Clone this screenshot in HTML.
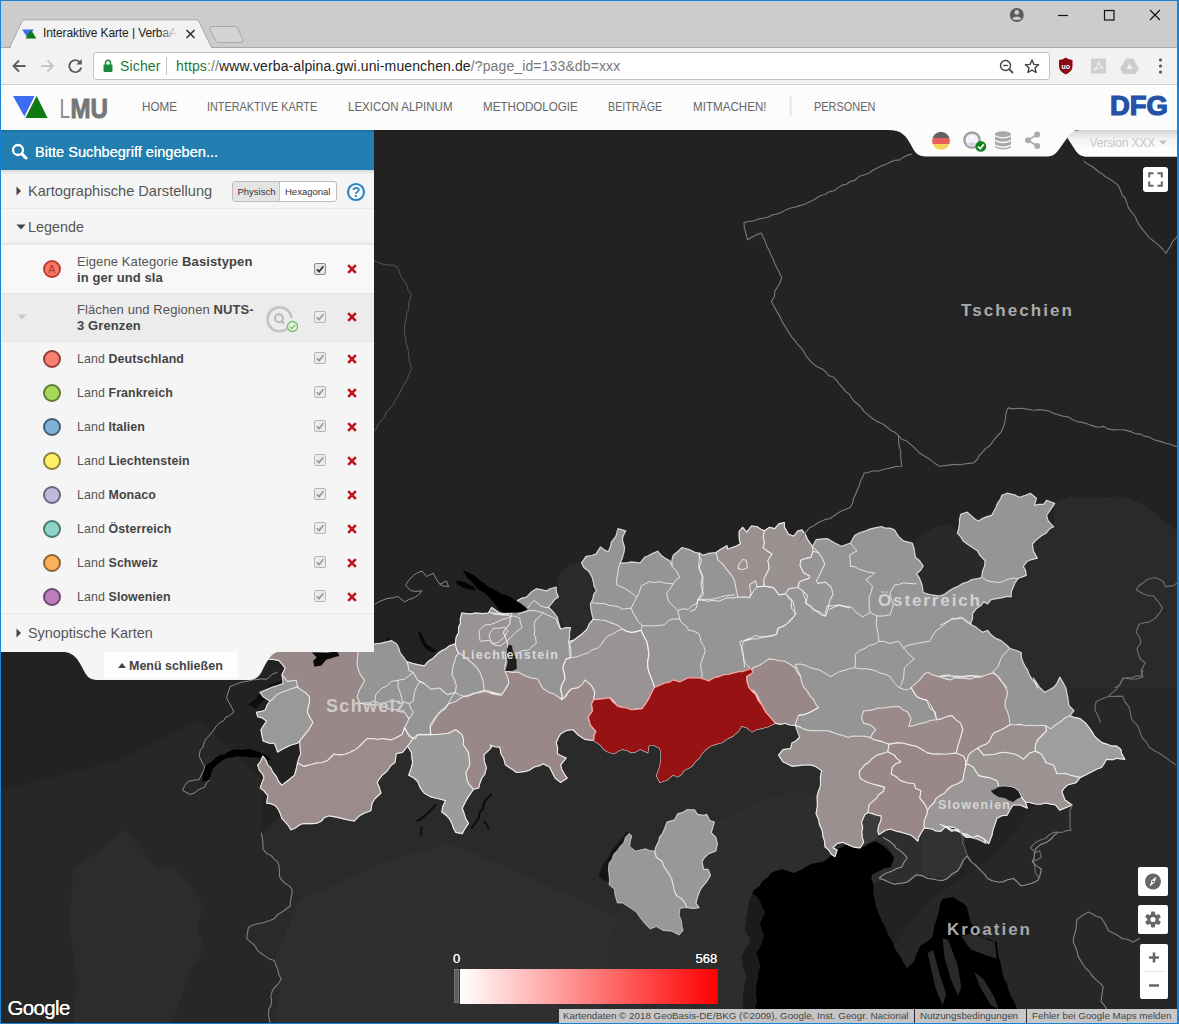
<!DOCTYPE html>
<html lang="de">
<head>
<meta charset="utf-8">
<title>Interaktive Karte | VerbaAlpina</title>
<style>
*{box-sizing:border-box;margin:0;padding:0}
html,body{width:1179px;height:1024px;overflow:hidden;background:#222}
body{font-family:"Liberation Sans",sans-serif;position:relative;color:#555}
.abs{position:absolute}
.t{position:absolute;white-space:nowrap;line-height:1}
#win{position:absolute;left:0;top:0;width:1179px;height:1024px;border:1px solid #1883d7;border-left-width:1px;border-right-width:2px;border-bottom-width:1.500px;pointer-events:none;z-index:100}
/* chrome */
#titlebar{position:absolute;left:0;top:0;width:1179px;height:48px;background:#cccccc}
#toolbar{position:absolute;left:0;top:47px;width:1179px;height:38px;background:#f2f2f2;border-bottom:1px solid #cfcfcf;border-top:1px solid #a9a9a9}
#urlbox{position:absolute;left:93px;top:4px;width:957px;height:28px;background:#fff;border:1px solid #c4c4c4;border-radius:3px}
/* nav */
#nav{position:absolute;left:0;top:85px;width:1179px;height:45px;background:#fcfcfc}
.nv{position:absolute;top:14.500px;transform-origin:0 50%;font-size:13px;color:#666;white-space:nowrap;line-height:14px}
/* map */
#map{position:absolute;left:0;top:130px;width:1179px;height:894px;background:#222}
/* panel */
#panel{position:absolute;left:2px;top:130px;width:372px;height:522px;background:#f5f5f5}
#search{position:absolute;left:0;top:0;width:372px;height:40px;background:#237fb1;box-shadow:inset 0 2px 2px -1px #1a6a98}
.row{position:absolute;left:0;width:372px}
.li{position:absolute;left:75px;font-size:13px;letter-spacing:0.100px;color:#555;white-space:nowrap;line-height:16px}
.li b{color:#444}
.dot{position:absolute;left:41px;width:18px;height:18px;border-radius:50%;border:2px solid #5e5e5e}
.cb{position:absolute;left:312px;width:12px;height:12px;border:1px solid #b5b5b5;border-radius:2px;background:#ececec}
.cb svg{position:absolute;left:0;top:0}
.rx{position:absolute;left:345px;width:10px;height:10px}
</style>
</head>
<body>
<!--CHROME-->
<div id="titlebar">
  <!-- tab -->
  <svg class="abs" style="left:0;top:0" width="300" height="48" viewBox="0 0 300 48">
    <path d="M6.5 47.5 L10 46.5 L22 21.5 Q23 20 25 19.8 L196 19.8 Q198 20 199 21.5 L211 46.5 L214.5 47.5 Z" fill="#f2f2f2" stroke="#a6a6a6" stroke-width="1"/>
    <path d="M210.5 26.5 L235 26.5 Q237 26.5 238 28.5 L243 40 Q243.500 42.500 241 42.500 L218.500 42.500 Q216.500 42.500 215.500 40.500 L210 29 Q209.300 26.500 211 26.500Z" fill="#d4d4d4" stroke="#a9a9a9" stroke-width="1"/>
    <polygon points="22.200,29.500 33.800,29.500 27.600,38" fill="#3d6cf0"/>
    <polygon points="31,29.700 25.600,38.400 36.400,38.400" fill="#0d7a12"/>
    <path d="M186.500 30 L194.500 38 M194.500 30 L186.500 38" stroke="#333" stroke-width="1.600" fill="none"/>
  </svg>
  <div class="t" style="left:43px;top:27px;font-size:12px;color:#222;width:136px;overflow:hidden;letter-spacing:-0.100px">Interaktive Karte | VerbaAlpina</div>
  <div class="abs" style="left:160px;top:24px;width:20px;height:20px;background:linear-gradient(90deg,rgba(242,242,242,0),#f2f2f2 85%)"></div>
  <!-- window controls -->
  <svg class="abs" style="left:1000px;top:0" width="179" height="32" viewBox="0 0 179 32">
    <circle cx="16.800" cy="15" r="7" fill="#5a5a5a"/>
    <circle cx="16.800" cy="12.400" r="2.300" fill="#ccc"/>
    <path d="M11.800 18.800 Q16.800 14.400 21.800 18.800 Q16.800 21.400 11.800 18.800Z" fill="#ccc"/>
    <path d="M58 15.500 H68" stroke="#111" stroke-width="1.200"/>
    <rect x="104.500" y="10.500" width="9.500" height="9.500" fill="none" stroke="#111" stroke-width="1.200"/>
    <path d="M150 10 L160 20 M160 10 L150 20" stroke="#111" stroke-width="1.200"/>
  </svg>
  </div>
<div class="abs" style="left:10.500px;top:47px;width:200px;height:1px;background:#f2f2f2;z-index:3"></div>
<div id="toolbar">
  <svg class="abs" style="left:0;top:-1px" width="93" height="38" viewBox="0 0 93 38">
    <path d="M25.500 19 H13.500 M19 13.500 L13.500 19 L19 24.500" stroke="#5a5a5a" stroke-width="1.800" fill="none"/>
    <path d="M41 19 H53 M47.500 13.500 L53 19 L47.500 24.500" stroke="#c6c6c6" stroke-width="1.800" fill="none"/>
    <path d="M80 15.300 A6 6 0 1 0 81.200 20.500" stroke="#5a5a5a" stroke-width="1.800" fill="none"/>
    <polygon points="81.800,12 81.800,17.500 76.300,17.500" fill="#5a5a5a"/>
  </svg>
  <div id="urlbox">
    <svg class="abs" style="left:8px;top:5px" width="12" height="16" viewBox="0 0 12 16">
      <rect x="1.500" y="6.500" width="9" height="7.500" rx="1" fill="#1a8a3a"/>
      <path d="M3.500 7 V4.800 A2.500 2.500 0 0 1 8.500 4.800 V7" stroke="#1a8a3a" stroke-width="1.500" fill="none"/>
    </svg>
    <div class="t" style="left:26px;top:6px;font-size:14px;color:#1a7a3a;letter-spacing:0.150px">Sicher</div>
    <div class="abs" style="left:72px;top:4px;width:1px;height:18px;background:#c8c8c8"></div>
    <div class="t" style="left:82px;top:6px;font-size:14px;color:#222;letter-spacing:0.120px"><span style="color:#1a7a3a">https</span><span style="color:#777">://</span>www.verba-alpina.gwi.uni-muenchen.de<span style="color:#777">/?page_id=133&amp;db=xxx</span></div>
    <svg class="abs" style="left:902px;top:4px" width="50" height="20" viewBox="0 0 50 20">
      <circle cx="9.500" cy="8.500" r="5" stroke="#444" stroke-width="1.400" fill="none"/>
      <path d="M13.200 12.200 L17 16" stroke="#444" stroke-width="1.800"/>
      <path d="M7.200 8.500 H11.800" stroke="#444" stroke-width="1.400"/>
      <path d="M36 3 L37.900 7.400 L42.600 7.800 L39 10.900 L40.100 15.500 L36 13.100 L31.900 15.500 L33 10.900 L29.400 7.800 L34.100 7.400Z" stroke="#444" stroke-width="1.400" fill="none" stroke-linejoin="round"/>
    </svg>
  </div>
  <svg class="abs" style="left:1055px;top:7px" width="120" height="24" viewBox="0 0 120 24">
    <path d="M4 5 Q8 4.500 10.800 2.500 Q13.500 4.500 17.500 5 V11 Q17.500 16.500 10.800 19.500 Q4 16.500 4 11Z" fill="#8a0a0f"/>
    <text x="10.800" y="13.500" font-family="Liberation Sans, sans-serif" font-size="7" font-weight="bold" fill="#fff" text-anchor="middle">uo</text>
    <rect x="36" y="3.500" width="15" height="15" fill="#cfcfcf"/>
    <path d="M39 15.500 Q43 11 43.500 6 Q44 10.500 48.500 13 Q43 12.500 39 15.500Z" fill="none" stroke="#efefef" stroke-width="1.200"/>
    <path d="M71 3.500 H78 L84 14 L80.500 19 H68 L65 14Z" fill="#cdcdcd"/>
    <path d="M74.500 8.500 L71.500 14 H77.500Z" fill="#f2f2f2"/>
    <circle cx="105.500" cy="5" r="1.600" fill="#555"/><circle cx="105.500" cy="11" r="1.600" fill="#555"/><circle cx="105.500" cy="17" r="1.600" fill="#555"/>
  </svg>
</div>
<!--/CHROME-->
<!--NAV-->
<div id="nav">
  <svg class="abs" style="left:0;top:0" width="130" height="45" viewBox="0 0 130 45">
    <polygon points="13,11 34.500,11 24.400,31.500" fill="#3d6cf0"/>
    <polygon points="36.600,11 25.400,33 47.600,33" fill="#0d7a12"/>
    <text x="59.500" y="32.600" font-family="Liberation Sans, sans-serif" font-size="27.500" fill="#8a8a8a" textLength="10.500" lengthAdjust="spacingAndGlyphs" style="font-weight:normal">L</text>
    <text x="70.500" y="32.600" font-family="Liberation Sans, sans-serif" font-size="27.500" font-weight="bold" fill="#767676" stroke="#767676" stroke-width="0.900" textLength="37.500" lengthAdjust="spacingAndGlyphs">MU</text>
  </svg>
  <div class="nv" id="n1" style="left:142px;transform:scaleX(0.897)">HOME</div>
  <div class="nv" id="n2" style="left:207px;transform:scaleX(0.835)">INTERAKTIVE KARTE</div>
  <div class="nv" id="n3" style="left:348px;transform:scaleX(0.888)">LEXICON ALPINUM</div>
  <div class="nv" id="n4" style="left:483px;transform:scaleX(0.893)">METHODOLOGIE</div>
  <div class="nv" id="n5" style="left:608px;transform:scaleX(0.825)">BEITRÄGE</div>
  <div class="nv" id="n6" style="left:693px;transform:scaleX(0.893)">MITMACHEN!</div>
  <div class="abs" style="left:789px;top:11px;width:3px;height:20px;background:#ececec"></div>
  <div class="nv" id="n7" style="left:813.500px;transform:scaleX(0.841)">PERSONEN</div>
  <svg class="abs" style="left:1108px;top:9px" width="64" height="24" viewBox="0 0 64 24">
    <text x="2" y="21" font-family="Liberation Sans, sans-serif" font-size="27" font-weight="bold" fill="#2452a8" textLength="58" lengthAdjust="spacingAndGlyphs" stroke="#2452a8" stroke-width="1.200">DFG</text>
  </svg>
</div>
<!--/NAV-->
<!--MAP-->
<div id="map"><svg class="abs" style="left:0;top:0" width="1179" height="894" viewBox="0 0 1179 894">
<rect x="0" y="0" width="1179" height="894" fill="#222222"/>
<path d="M261.2 702.6 L263 719.1 L277.6 731.9 L279.5 746.5 L292.2 759.3 L290.4 775.7 L270.3 790.3 L248.4 797.6 L246.6 808.6 L261.2 823.2 L274 830.5 L281.3 848.8 L272.1 861.6 L268.5 885.3 L270.3 894.1 L765 894 L760 800 L800 770 L830 730 L830 670 L826 630 L810 600 L780 570 L700 560 L600 570 L520 610 L480 590 L450 610 L410 615 L380 640 L300 670Z" fill="#2a2a2a"/>
<path d="M300 770 L380 733.6 L447.8 713.3 L515.5 740.4 L603.6 781 L664.6 808.2 L732.4 815 L759.5 835.3 L746 894 L275 894 L280 855 L272 835Z" fill="#2f2f2f"/>
<path d="M0 660 L120 630 L200 590 L262 650 L261.2 702.6 L263 719.1 L277.6 731.9 L279.5 746.5 L292.2 759.3 L290.4 775.7 L270.3 790.3 L248.4 797.6 L246.6 808.6 L261.2 823.2 L274 830.5 L281.3 848.8 L272.1 861.6 L268.5 885.3 L270.3 894.1 L0 894Z" fill="#272727"/>
<path d="M73.1 739.2 L95 724.6 L124.2 699 L146.1 724.6 L157.1 739.2 L171.7 735.5 L190 753.8 L204.6 775.7 L197.3 797.6 L204.6 819.5 L190 841.5 L182.6 863.4 L171.7 894.1 L73.1 894.1 L76.7 848.8 L69.4 797.6Z" fill="#2c2c2c"/>
<path d="M640 720 L700 700 L760 670 L800 660 L830 670 L880 710 L905 740 L880 750 L850 770 L800 770 L760 800 L765 894 L600 894 L610 810Z" fill="#2d2d2d"/>
<path d="M1010 510 L1060 450 L1120 430 L1179 410 L1179 894 L900 894 L880 830 L930 770 L990 730 L1040 670 L1075 630Z" fill="#272727"/>
<path d="M912.1 24 L877.8 37.7 L850.3 51.5 L809.2 72 L781.7 82.3 L744 92.6 L747.4 109.8 L774.8 133.8 L781.7 147.5 L771.4 171.5 L788.6 202.4 L809.2 229.9 L836.6 250.5 L864 281.3 L898.4 305.3 L918.9 322.5 L939.5 336.2 L973.8 332.8 L1001.3 301.9 L1008.1 277.9 L1049.3 281.3 L1090.5 295.1 L1131.7 301.9 L1179 317 L1179 159.9 L1166 123.5 L1145.4 102.9 L1131.7 82.3 L1117.9 54.9 L1083.6 30.9 L1056.2 13.7 L918.9 13.7Z" fill="#242424"/>
<path d="M1053.7 396.7 L1054.7 373.4 L1070 366.2 L1094.3 368.3 L1122.8 366.2 L1143.1 374.4 L1163.4 390.6 L1179 402.8 L1179 557.9 L1037.5 557.9 L1029.3 544.9 L1023.3 532.8 L1021.2 522.6 L1010.1 518.5 L1000.9 510.4 L995.8 508.4 L987.7 500.3 L982.6 502.3 L970.5 494.2 L972.5 484 L983.7 471.8 L987.7 473.9 L990.8 469.8 L1011.1 466.8 L1013.1 457.6 L1018.2 448.5 L1026.3 445.4 L1023.3 436.3 L1027.3 431.2 L1037.5 428.2 L1033.4 421.1 L1032.4 414 L1041.5 405.8Z" fill="#2a2a2a"/>
<path d="M915.5 427.4 L912.2 413 L923.2 403.1 L938.6 396.5 L951.9 394.3 L957.4 403.1 L962.9 410.8 L977.3 420.8 L985 430.7 L981.7 447.2 L971.7 449.5 L958.5 456.1 L939.7 466 L923.2 462.7 L922.1 455 L916.6 443.9 L923.2 436.2Z" fill="#292929"/>
<path d="M864.7 684.7 L872.4 683.6 L877.1 685.3 L881.3 685.8 L881 690.3 L878.5 696.5 L877.9 701.3 L879 704.6 L874.6 710.1 L869.2 712.5 L865.8 714.5 L863.6 712.3 L862.2 707.4 L861.7 701.3 L862.7 697.9 L861.4 692.4Z" fill="#3c3c3c"/>
<path d="M921 701.3 L926.7 699.6 L932 699 L935.5 700.8 L940.8 701.3 L945.3 696.8 L951.9 701.3 L957.4 699 L962.9 704.6 L964.7 709.7 L965.1 714.5 L966.2 720.9 L967.3 725.5 L964.6 730.3 L962.9 736.6 L958.2 740.6 L955.2 745.4 L950.3 747.6 L945.3 749.8 L938.6 747.6 L934.2 748.7 L930.2 746.8 L925.4 746.5 L922.5 741.3 L921 736.6 L921.6 730.1 L921.1 725.9 L922.1 718.9 L921.8 712.5 L920.6 707.8Z" fill="#323232"/>
<path d="M879 704.6 L885.1 700.5 L890.1 699 L896.7 701.3 L900.3 701.9 L905.5 703.5 L911.3 705.3 L914.4 707.9 L917.7 711.2 L919.5 706.4 L921 701.3 L920.6 707.8 L921.8 712.5 L922.1 718.9 L921.1 725.9 L921.6 730.1 L921 736.6 L922.5 741.3 L925.4 746.5 L921.1 745.8 L914.4 745.4 L909.9 752 L903.6 754.7 L898.9 755.3 L894.5 750.9 L885.7 752 L881.4 750.6 L876.8 748.7 L881.3 742.1 L888.2 740.8 L892.3 738.8 L890.1 734.4 L894.5 729.9 L893 726.1 L890.1 721.1 L887.7 717.6 L883.5 712.3 L879.6 710.5 L874.6 710.1Z" fill="#2e2e2e"/>
<path d="M756 894.1 L756.3 889.1 L757 883.7 L756.6 880 L755 876.4 L756.8 871.3 L756 866.8 L755.7 860.5 L756 856.7 L757.1 851.8 L757.5 847.6 L758 843 L759.7 838.1 L759.4 833.4 L757.5 827.2 L756 823.2 L759.1 818.7 L761.2 814.5 L763.4 808.2 L763.2 803.5 L761.1 799.1 L759.7 793.3 L762.1 788.4 L765.3 782.1 L762.1 777.4 L759.7 770.9 L756.1 766 L752.2 763.4 L754.1 760.1 L759.6 756 L761.6 752.2 L767.5 747.4 L770.9 742.9 L775.7 741 L782.1 739.2 L787.3 740.7 L793.3 742.9 L799.1 740.7 L804.6 738 L808.2 735.5 L812.1 733.8 L818.7 732.6 L823.2 731.7 L827.6 728.8 L830.6 726.1 L834.4 720.5 L841.1 717.6 L845.5 714.9 L850.9 715.8 L854.5 715.1 L859.8 716.8 L864.2 716.8 L868.5 713.8 L875.4 711.2 L881.7 714.6 L886.6 718.7 L891.5 723.8 L894.1 728 L892.7 732.1 L890.3 737.3 L884.4 738.3 L879.1 741.1 L871.7 744.8 L871.4 748.6 L873.5 754.7 L873.5 759.7 L873.4 765.6 L875 769.4 L875.4 774.6 L877 779 L878.4 783.7 L880.7 787.7 L882.9 793.3 L885.6 797.4 L887.7 804.3 L890.3 808.2 L893.5 813.4 L894.4 817.8 L897.8 823.2 L901.6 828.2 L903.8 833.5 L907.1 838.1 L910.9 835 L914.6 830.6 L916 824.4 L918.2 820.7 L920.2 815.7 L925 813.1 L931.4 808.2 L933.3 803.7 L934 799.5 L934.2 795.7 L936.3 790.5 L937.4 786.9 L938.8 782.1 L939.3 778.6 L940.5 772.9 L942.6 769 L948.6 767.8 L953.8 767.2 L957.6 770.3 L962.2 772.4 L966.8 776.5 L968.1 782.9 L970 788.9 L970.6 793.3 L975 797.5 L977.2 801.6 L979.2 804.1 L983.6 808.2 L989.3 808.9 L991.7 810.6 L996.7 812 L997.2 816 L997.5 820.8 L998.6 826.9 L1000.4 832.1 L1001.3 836.7 L1002 839.3 L1002.6 844.1 L1004.2 849.3 L1007.3 854.2 L1007.7 856.9 L1009.1 861.2 L1010.7 866 L1013.4 870.6 L1015.7 875.6 L1017.2 879.1 L1017.9 883.6 L1019.8 888.6 L1020.9 894.1 L1016 894.5 L1011.7 893.5 L1007 894.3 L1002.4 894.8 L997.3 894.2 L992.5 894.8 L988.9 893.6 L984 894.5 L979.8 893.6 L974.1 894.8 L970.8 893.7 L965.2 894.2 L961.8 893.3 L957.1 894.5 L953.5 894.4 L947.2 894.2 L942.7 893.3 L938 895 L934.7 893.3 L928.7 893.2 L925 894.5 L919.5 894.1 L915.5 894.8 L911.2 893.1 L905.7 894.2 L901.6 894 L898.3 894.9 L893.2 894.9 L887.7 894.6 L884.3 895.1 L880.4 893.7 L875.8 894.9 L870.8 893.8 L866.2 893.8 L861 893.9 L857.4 893.8 L852.2 894.7 L846.8 893.5 L841.9 895.1 L837.7 894.4 L834.7 893.7 L830.2 894 L824.2 895.1 L820.4 895 L814.5 893.5 L811.8 893.5 L806.5 893.6 L800.7 893.7 L796.4 893.9 L793.2 893.9 L787.4 894.2 L782.6 895 L778.1 895 L774 893.4 L769.5 894.5 L764 894.1 L759.8 894.9Z" fill="#000000"/>
<path d="M756 894.1 L756.3 889.1 L757 883.7 L756.6 880 L755 876.4 L756.8 871.3 L756 866.8 L755.7 860.5 L756 856.7 L757.1 851.8 L757.5 847.6 L758 843 L759.7 838.1 L759.4 833.4 L757.5 827.2 L756 823.2 L759.1 818.7 L761.2 814.5 L763.4 808.2 L763.2 803.5 L761.1 799.1 L759.7 793.3 L762.1 788.4 L765.3 782.1 L762.1 777.4 L759.7 770.9 L756.1 766 L752.2 763.4 L750.1 768.5 L748.5 774.6 L747.9 778.6 L746.8 784.2 L745.7 786.9 L746.1 793.4 L744.8 797 L746 803 L749.2 806.6 L750.4 812 L746.7 816.6 L744.1 821.3 L741.1 826.9 L742.7 830.5 L742.4 835 L744.1 840.6 L745.9 843.7 L746.6 849.3 L744.6 854.6 L743.7 859.6 L743.1 863.1 L742.9 867.9 L742.5 874.3 L743.6 878.9 L744.4 883.9 L744.1 888.9 L744.8 894.1 L751.3 894.4Z" fill="#1b1b1b"/>
<path d="M942.6 808.2 L948.2 810.1 L957.5 834.4 L961.2 856.7 L958.3 866.1 L950.8 849.3 L944.4 826.9Z" fill="#2a2a2a"/>
<path d="M961.2 806.4 L974.3 802.6 L983.6 808.2 L994.8 812 L996.7 828.8 L985.5 825 L970.6 819.4Z" fill="#2a2a2a"/>
<path d="M927.7 823.2 L933.2 819.4 L938.8 841.8 L946.3 864.2 L942.6 875.4 L935.1 856.7Z" fill="#2a2a2a"/>
<path d="M974.3 841.8 L983.6 849.3 L994.8 867.9 L998.6 879.1 L991.1 875.4 L979.9 856.7Z" fill="#2a2a2a"/>
<path d="M417.7 500.6 L421.1 502.8 L424.4 509.8 L426.6 513.9 L433.2 518.3 L436.5 520.5 L433.2 522.7 L426.6 519.4 L424.1 516.8 L421.1 511.7 L419.2 506Z" fill="#0a0a0a"/>
<path d="M386.8 507.2 L389.5 508.4 L388.6 516.1 L386.4 517.2 L387.2 513Z" fill="#0a0a0a"/>
<path d="M201.6 651.5 L203.4 644.7 L203.8 638.7 L207.1 634.4 L212.4 631.2 L215.5 627.8 L220.9 624.6 L224 624.8 L228.3 621.8 L233.8 619.7 L238 619.3 L242.5 619.9 L248.3 619 L252.1 619.4 L255.7 620.9 L260.9 622.8 L266.7 625.2 L271.1 630.3 L265.3 629.4 L261.6 627.7 L255.7 627.4 L250.2 627.4 L247.1 626.4 L241.4 626.8 L237.4 625.9 L233.4 627.6 L227.2 627.9 L222.8 630.3 L217.8 633.7 L212.6 639.1 L211.1 643.8 L208.9 650Z" fill="#000000"/>
<path d="M248.4 574.8 L252.7 571 L255.9 568.7 L259.7 563.6 L262.8 560.3 L266.7 558.8 L270.3 554.7 L273.6 553.2 L278 551.9 L283.1 549.2 L284.9 554.7 L280.3 556.9 L276.9 559.7 L272.1 563.8 L267.8 567.5 L262.7 571.1 L260.3 573.6 L255.7 578.4Z" fill="#0d0d0d"/>
<path d="M609 733.3 L611.9 729.5 L613.9 724.1 L618.2 719.5 L620.5 715.9 L623.6 712.9 L625.5 707.2 L628.9 703.5 L626.6 701.2 L624.3 705 L620.5 709.8 L616.6 715 L612.7 718.8 L610.3 722.9 L607.5 729.1 L604.4 731.8 L601.8 737.1 L600.7 740.3 L598.3 745.5 L602.9 750.1 L609 751.6 L608.5 746.8 L608.1 741.9 L608.8 737.1Z" fill="#151515"/>
<path d="M559.7 443.1 L568.5 435.4 L581.7 432.1 L588.3 440.9 L592.7 454.1 L596 462.9 L591.6 474 L592.7 485 L590.5 494.9 L581.7 502.6 L576.2 510.3 L569.6 513.6 L566.3 507 L564.1 497.1 L558.5 487.2 L549.7 476.2 L546.4 467.3 L558.5 460.7 L557.4 449.7Z" fill="#2b2b2b"/>
<path d="M266 515 L270.2 514.5 L275.2 514.3 L280 515.2 L284.1 514.7 L288.4 515 L294.6 514 L299.3 514.8 L303.1 514 L307.7 514.8 L311.6 515.1 L317.1 514.3 L321.2 515 L325.9 515.5 L331.2 515.3 L335.3 514.4 L340.1 514.7 L344.8 516 L348.9 514.7 L354.4 515.4 L358 515 L358.1 522 L358.1 513.9 L365 514.6 L367.8 513.1 L374.7 513.9 L381.2 513.1 L384.6 512.3 L391.3 510.6 L396.8 513.9 L399 518.5 L400.1 522.7 L403.9 527.7 L406.7 531.5 L413.3 533.7 L419.9 535.1 L424.4 535.9 L428.5 531.2 L433.2 528.2 L437.6 523.8 L442 520.5 L445.6 519 L449.6 515.7 L455.3 513.9 L456.3 506.9 L458.6 502.8 L458.7 496.8 L460.5 493.4 L460.3 488.8 L461.9 483 L470.7 484.1 L475.2 483 L483 483.6 L488.4 483 L491.7 477.5 L496.1 480.7 L499.4 483 L506 484 L510 485.2 L504.1 485.3 L499.7 484.6 L494.2 484.1 L490 482.6 L498.8 483.7 L504 484.2 L512.1 482.6 L515.1 478.4 L517.6 470.4 L522.1 468.1 L526.4 467.1 L531.6 461.7 L536.3 458.7 L541.1 459.7 L546.3 460.9 L550.7 458.5 L556.2 457.2 L556.4 462.3 L558.4 467.1 L554.5 469.8 L551.8 473.4 L548.5 477 L553.1 481.6 L557.3 487 L558.5 491.9 L560.6 499.1 L565.8 497.5 L570.6 497.6 L569.5 503 L569.6 507.5 L568.4 511.3 L573.9 510.2 L577.7 507.3 L582.3 503.8 L587.1 499.1 L589.4 493.9 L593.3 489.2 L592 484.7 L590.9 479 L590.4 473.7 L592.7 469.3 L593.7 464.3 L596.4 460.5 L593.9 456 L593.5 452.7 L592 447.2 L588.9 441.4 L583.8 437.5 L581.6 432.9 L586 426.3 L591.7 425.5 L595.9 424.1 L600.4 417 L604.3 419.8 L608.1 421.9 L610.3 417.1 L611.4 411.9 L615.8 406.4 L618 398.7 L625.7 400.9 L623.2 405.9 L622.4 409.7 L624.6 417.5 L624.1 421.9 L622.3 428.4 L620.2 432.9 L626.5 432.9 L631.3 431.8 L640.1 432.9 L644.5 427.4 L648.1 425.8 L653.3 423 L657.7 421.2 L661.1 425.2 L664.4 427.8 L669.9 430.7 L672.1 436.2 L671.8 430.5 L673.2 425.2 L678.6 420.7 L682 417.5 L689.7 419.7 L695 422.4 L699.7 423 L703 425.2 L710.7 423 L707.8 423.3 L716 422.6 L720.5 419.5 L726.9 415.8 L727.6 419.2 L733 417.2 L736.6 416.1 L740.6 413.8 L739.3 409 L739.2 401.5 L742.6 397.4 L746.8 402.1 L751.5 396 L757 396.7 L761.1 399.4 L764.5 400.8 L769.3 397.4 L774.8 398.7 L778.9 393.9 L784.4 392.6 L784.4 397.4 L788.5 404.2 L793.9 406.2 L798 400.8 L802.1 400.1 L805.5 404.9 L807.6 409.7 L812.4 416.5 L816.1 409.7 L822.3 408.9 L827.2 408.6 L834.9 413 L841.5 416.3 L846.9 414.2 L850.4 413 L854.8 405.3 L860.1 402.5 L865.8 400.9 L869.7 399.1 L874.8 397.8 L881.3 396.5 L884.8 397.8 L889.9 398.1 L894.5 399.8 L896.9 403.8 L899 406.9 L903.3 410.8 L908.3 412.1 L912.2 413 L914 418.3 L914.7 422.8 L915.5 427.4 L919.2 430.2 L923.2 436.2 L920.6 440.3 L916.6 443.9 L919.4 447.8 L922.1 455 L923.2 462.7 L929.7 464.5 L934.9 465.3 L939.7 466 L944.2 464.4 L949.3 460.7 L952.5 458.8 L958.5 456.1 L962 453.7 L967.3 452.2 L971.7 449.5 L977.5 448.7 L981.7 447.2 L982.6 440.9 L984.6 435.8 L985 430.7 L979.9 425.4 L977.3 420.8 L973.1 418.1 L967.1 413.9 L962.9 410.8 L960.7 406.8 L957.4 403.1 L958.6 398.7 L959.5 393.8 L959.5 389.5 L960.7 384.3 L967.3 382.1 L970.6 385.1 L975.2 389.3 L978.4 391 L981.7 388.9 L986.8 386.6 L991.6 385.4 L994.3 380.5 L996.1 376.9 L997.3 373.7 L1000.7 368.5 L1001.9 365.2 L1007 363.2 L1014.8 364.9 L1019.2 367.3 L1025.4 365.4 L1030.4 363.2 L1036.5 368.3 L1034.4 375.4 L1038.6 374.3 L1043.6 374.4 L1046.6 370.3 L1054.7 373.4 L1050.7 379.4 L1046.6 385.5 L1048 390.4 L1050.7 393.7 L1053.7 396.7 L1049.8 398.6 L1046.4 403 L1041.5 405.8 L1036.8 409.4 L1032.4 414 L1033.4 421.1 L1037.5 428.2 L1031.3 429.7 L1027.3 431.2 L1023.3 436.3 L1025.5 440.4 L1026.3 445.4 L1018.2 448.5 L1015 452.9 L1013.1 457.6 L1011.4 461.5 L1011.1 466.8 L1007.1 466.4 L1001.5 467.9 L994.8 468.9 L990.8 469.8 L987.7 473.9 L983.7 471.8 L981 475.6 L975.7 479.3 L972.5 484 L972.6 488.2 L970.5 494.2 L975.4 496.7 L978.8 499.4 L982.6 502.3 L987.7 500.3 L991.1 504.8 L995.8 508.4 L1000.9 510.4 L1006.7 515.2 L1010.1 518.5 L1016.6 520.5 L1021.2 522.6 L1021.4 527.4 L1023.3 532.8 L1025.1 536.3 L1027.5 539.8 L1029.3 544.9 L1032.5 549.8 L1035.4 553.1 L1037.5 557.9 L1035.2 551.9 L1033.4 548.1 L1036.8 553.1 L1039.5 557.3 L1044.6 562.3 L1048.6 560.2 L1053.7 557.3 L1057 553.3 L1059.8 547.1 L1062.9 552.2 L1066 558 L1066.9 563.4 L1067.9 568 L1068.9 575.5 L1074 580.6 L1070 585.7 L1073.9 587.4 L1080.1 588.7 L1086.2 593.8 L1091.3 600.9 L1094.5 606.3 L1097.4 609 L1102.3 612.9 L1106.5 614.1 L1111.5 616.1 L1116.7 616.1 L1120.7 619.2 L1121.5 623.5 L1124.8 629.3 L1116.7 628.3 L1112.8 629.7 L1106.5 629.3 L1103.7 634.2 L1101.4 637.5 L1097 639 L1090.3 642.5 L1085.4 644.9 L1080.1 647.6 L1076 652.7 L1067.9 654.7 L1063.8 658.4 L1061.8 661.8 L1064.9 670 L1072 675 L1064.6 678.1 L1059.8 680.1 L1055.7 675 L1050 673.9 L1045.6 673 L1039.8 674.2 L1035.4 674 L1029.6 672.5 L1025.3 672 L1027.3 678.1 L1020.2 675 L1013.1 675 L1010.2 679.1 L1007 685.2 L1001.8 685.7 L996.9 688.2 L995.2 693.4 L992.8 700.4 L991.9 705.5 L990.6 708.5 L988.7 713.6 L983.7 708.5 L977.6 705.5 L972.8 707.3 L966.4 707.5 L960.3 702.4 L954.2 697.4 L946.1 696.4 L940 694.3 L944.6 696.5 L947.6 697.3 L952.4 700.2 L957.6 701.2 L962 703.3 L964.5 704.2 L968.4 705.9 L973.7 708.5 L977.6 709.1 L981.8 711.3 L986.1 713.4 L984.3 709.2 L980.6 705.7 L971.7 706.8 L966.5 705.6 L962.9 704.6 L957.4 699 L951.9 701.3 L945.3 696.8 L940.8 701.3 L935.5 700.8 L932 699 L924.3 697.9 L921.5 702.3 L918.7 707.1 L917.7 711.2 L914.4 707.9 L911.3 705.3 L905.5 703.5 L900.3 701.9 L896.7 701.3 L890.1 699 L885.1 700.5 L879 704.6 L877.9 701.3 L878.5 696.5 L881 690.3 L881.3 685.8 L877.1 685.3 L872.4 683.6 L868 682.5 L864.7 684.7 L861.4 692.4 L862.7 697.9 L861.7 701.3 L862.2 707.4 L863.6 712.3 L860.3 717.8 L854.7 717.4 L850.4 715.6 L842.6 712.3 L837.1 713.4 L832.7 717.8 L837.1 720 L834.9 726.6 L831.6 724.4 L829 720.2 L825 716.7 L824.6 711.1 L822.8 705.7 L822.3 700.6 L819.5 694.6 L818.8 690 L816.1 683.6 L817.4 676.3 L817.3 671.9 L817.2 665.9 L818.3 661.8 L820.4 656.4 L820.6 652.7 L820.4 647.7 L821.7 640.6 L815 636.1 L810.6 634.9 L804 635 L798.2 635.6 L791.9 636.1 L786.7 633.4 L783 631.7 L778.6 625.1 L783 619.6 L790.8 618.5 L791.9 613 L795.5 611.2 L799.6 607.5 L800.9 601.8 L800.7 597.5 L795.2 595.3 L790.1 595 L784.5 593.2 L780.9 594.4 L775.3 593.1 L768.7 596.4 L761 598.6 L755.8 599.7 L752.1 601.9 L746.6 597.5 L740 595.3 L744.3 595.9 L750 598.4 L741.6 596.1 L738.6 601 L732.8 606.1 L726.6 609.3 L721.7 612.7 L715.9 614.1 L710.7 616 L705.3 619.8 L701.9 623.7 L699.6 627.5 L695.6 631.2 L693.1 634.8 L689.9 637.5 L684.2 640.3 L681.5 644.2 L677.6 646.9 L673.2 644.7 L666.6 650.2 L659.9 652.4 L656.6 645.8 L658.4 640.5 L659.9 637 L661.1 628.1 L661 623.5 L659.9 618.2 L653.3 614.9 L648.9 614.9 L647.8 622.6 L640.1 619.3 L635.2 622.2 L631.3 622.6 L627.4 620.5 L622.4 619.3 L618 621.2 L613.6 623.7 L607 621.5 L603.3 618.8 L600.4 614.9 L593.7 610.5 L584.9 609.4 L578.3 605 L572.8 599.5 L566.1 600.6 L560.6 603.9 L558.5 607.3 L556.2 612.7 L557.6 618.5 L557.3 623.7 L561 625.7 L566.1 628.1 L560.6 634.8 L561.4 638.7 L563.9 643.6 L567.2 648 L560.6 652.4 L555.1 648 L552.2 642.3 L549.6 637 L543 633.7 L539.5 635.6 L534.1 637 L529.2 640.2 L525.3 641.4 L516.5 642.5 L513.7 640.2 L509 637.3 L505.4 634.8 L503.8 628.6 L501 623.7 L499.9 617.1 L494.8 616.7 L490 614.9 L491.4 617.3 L487.6 621.4 L483.8 624.9 L484.3 631.4 L486.3 637.6 L484.8 644 L481.7 648.3 L479.6 653.7 L478.7 657.9 L473.6 659.2 L471 662.8 L468.4 666.6 L466 670.6 L462.2 678.2 L464 683.3 L465.8 689.1 L468.5 693.4 L465.4 697.8 L462.2 703.6 L455.8 702.3 L453.4 697.9 L452 693.4 L449.7 689 L446.9 685.8 L441.9 682 L442.8 676.6 L445.7 670.6 L440.7 669.2 L435.5 668 L430.3 666.6 L424.1 663 L420.2 657.6 L417.7 651.5 L413.7 647.7 L408.8 645.2 L411.4 637.6 L412.7 632.5 L412.1 628.7 L411.4 622.3 L407.6 616 L402.5 622.3 L396.2 623.6 L394.9 632.5 L391.1 635.2 L387.1 641 L382.2 645.2 L378.9 649.3 L377.1 652.8 L379.3 657.6 L380.9 663 L375 668.5 L372 673.1 L370.8 680.7 L364.5 683 L359.3 685.8 L354.3 690.9 L348.3 690 L341.6 688.4 L336.5 687.1 L328.9 685.8 L324 687.8 L321.1 691.3 L316.2 693.4 L309.6 693.6 L303.5 693.4 L300.1 694.5 L295.3 697.9 L290.8 699.8 L288.5 695.6 L284.5 691.2 L281.9 688.4 L280.6 684.2 L278.5 679.6 L275.5 675.7 L270.8 673.6 L266.7 673.1 L267.9 665.5 L264 660.9 L260.3 657.9 L262.3 651.9 L264.1 647.7 L262.5 643.6 L259.5 640.3 L257.8 635 L260.5 631.8 L262.9 626.2 L265.5 629.5 L267.8 635.1 L270.5 637.6 L272.4 641.5 L276.5 646.9 L278.3 651.2 L281.9 655.4 L285.8 652.2 L290.3 648.7 L294.6 645.2 L296.4 638.5 L297.5 633.1 L299.1 627.4 L300.8 624.2 L300.1 618 L299.7 611 L297.5 613.2 L291.7 614.7 L285.3 617.6 L277.6 622 L276.1 617.4 L274.3 613.2 L269.5 613.2 L263.2 611 L262 605.3 L261 599.9 L263.9 595 L266.6 591.1 L262.1 587.8 L257.7 586.7 L256.6 582.3 L261.8 581.3 L265.4 580.1 L267.2 575 L269.9 571.3 L263.2 566.8 L259.9 562.4 L267.7 559.1 L272.9 556.8 L276.5 555.8 L283.1 553.6 L282 544.8 L285.3 538.1 L282.5 534.5 L278.7 530.4 L271.7 529.2 L266.6 529.3 L266.9 524.1 L266.8 520.9Z" fill="#959595" stroke="rgba(255,255,255,0.75)" stroke-width="1.2" stroke-linejoin="round"/>
<path d="M266 515 L270.2 514.5 L275.2 514.3 L280 515.2 L284.1 514.7 L288.4 515 L294.6 514 L299.3 514.8 L303.1 514 L307.7 514.8 L311.6 515.1 L317.1 514.3 L321.2 515 L325.9 515.5 L331.2 515.3 L335.3 514.4 L340.1 514.7 L344.8 516 L348.9 514.7 L354.4 515.4 L358 515 L358.1 522 L357.5 527.8 L357 533.7 L358 538.5 L360.4 544.8 L364.8 550.3 L361.9 555.5 L359.3 560.2 L357 566.8 L360.4 573.5 L368 574.6 L373.6 574.6 L378.2 575 L381.9 576.2 L386.8 577.9 L390.3 579.2 L396.3 579.6 L399.4 581.7 L404.5 582.3 L408.9 588.9 L407.2 592.8 L404.5 597.7 L402.3 604.4 L395.6 608 L391.3 609.9 L382.4 608.8 L377 609.5 L372.8 608.5 L367 608.8 L361.8 614 L358.1 617.6 L353.7 620.6 L350.2 622.2 L344.9 624.2 L339.8 624.9 L333.9 624.2 L330.8 627.5 L327.2 630.8 L321.6 632.7 L316.2 633.1 L311.4 634.5 L304.1 636.4 L297.5 633.1 L299.1 627.4 L300.8 624.2 L300.1 618 L299.7 611 L303 606.6 L308.5 599.9 L312.9 592.2 L309.8 587.8 L307.4 582.3 L307.9 577.6 L309.3 572.7 L309.6 566.8 L305.2 562.4 L300.5 559.6 L297.5 556.9 L296.3 550.3 L287.5 551.4 L282 544.8 L285.3 538.1 L282.5 534.5 L278.7 530.4 L271.7 529.2 L266.6 529.3 L266.9 524.1 L266.8 520.9Z" fill="#9a8888" stroke="rgba(255,255,255,0.72)" stroke-width="1.1" stroke-linejoin="round"/>
<path d="M297.5 633.1 L304.1 636.4 L311.4 634.5 L316.2 633.1 L321.6 632.7 L327.2 630.8 L330.8 627.5 L333.9 624.2 L339.8 624.9 L344.9 624.2 L350.2 622.2 L353.7 620.6 L358.1 617.6 L361.8 614 L367 608.8 L372.8 608.5 L377 609.5 L382.4 608.8 L391.3 609.9 L395.6 608 L402.3 604.4 L404.5 597.7 L407.7 603.1 L412.7 608.4 L410.1 613 L407.6 616 L402.5 622.3 L396.2 623.6 L394.9 632.5 L391.1 635.2 L387.1 641 L382.2 645.2 L378.9 649.3 L377.1 652.8 L379.3 657.6 L380.9 663 L375 668.5 L372 673.1 L370.8 680.7 L364.5 683 L359.3 685.8 L354.3 690.9 L348.3 690 L341.6 688.4 L336.5 687.1 L328.9 685.8 L324 687.8 L321.1 691.3 L316.2 693.4 L309.6 693.6 L303.5 693.4 L300.1 694.5 L295.3 697.9 L290.8 699.8 L288.5 695.6 L284.5 691.2 L281.9 688.4 L280.6 684.2 L278.5 679.6 L275.5 675.7 L270.8 673.6 L266.7 673.1 L267.9 665.5 L264 660.9 L260.3 657.9 L262.3 651.9 L264.1 647.7 L262.5 643.6 L259.5 640.3 L257.8 635 L260.5 631.8 L262.9 626.2 L265.5 629.5 L267.8 635.1 L270.5 637.6 L272.4 641.5 L276.5 646.9 L278.3 651.2 L281.9 655.4 L285.8 652.2 L290.3 648.7 L294.6 645.2 L296.4 638.5Z" fill="#9b8b8b" stroke="rgba(255,255,255,0.72)" stroke-width="1.1" stroke-linejoin="round"/>
<path d="M412.7 608.4 L417.7 604.6 L424.3 604.9 L430.4 604.6 L435.4 604.5 L443.4 603.7 L448.2 603.3 L455.8 599.5 L462.2 604.6 L463.6 609.3 L463.4 614.7 L466.5 619.4 L468.5 622.3 L469.4 628.8 L469.8 635 L466 642.7 L467.2 650.3 L469.4 654.7 L473.6 659.2 L471 662.8 L468.4 666.6 L466 670.6 L462.2 678.2 L464 683.3 L465.8 689.1 L468.5 693.4 L465.4 697.8 L462.2 703.6 L455.8 702.3 L453.4 697.9 L452 693.4 L449.7 689 L446.9 685.8 L441.9 682 L442.8 676.6 L445.7 670.6 L440.7 669.2 L435.5 668 L430.3 666.6 L424.1 663 L420.2 657.6 L417.7 651.5 L413.7 647.7 L408.8 645.2 L411.4 637.6 L412.7 632.5 L412.1 628.7 L411.4 622.3 L407.6 616 L410.1 613Z" fill="#9b9b9b" stroke="rgba(255,255,255,0.72)" stroke-width="1.1" stroke-linejoin="round"/>
<path d="M430.4 604.6 L430.4 597 L433.1 592.7 L435.5 588.1 L437.9 584.6 L441.4 581.3 L445.3 578.8 L448.2 574.1 L455.8 571.6 L459.3 569 L463.4 566.5 L469.1 565.1 L473.4 563 L478.6 563 L483.8 561.4 L488.6 562.3 L495.2 563 L500 563.9 L501 565.2 L504.3 560.5 L506.9 557 L508.8 553.1 L507 549.7 L504.3 544.3 L506.6 541 L512.2 542.4 L517.6 542.1 L521.2 543.7 L526.4 546.5 L531.4 548.1 L537.5 548.7 L540.8 554.9 L543 558.6 L548.7 562.2 L554 564.1 L558.9 567.2 L561.7 569.7 L566 566.3 L568.2 562 L571.7 558.6 L578.3 557.5 L580.8 554.1 L584.9 549.8 L591.5 555.3 L594.8 561.9 L593.7 569.7 L591.5 574.1 L592.6 580.7 L588.2 587.3 L590.4 595 L595.9 601.7 L594.1 605.5 L593.7 610.5 L584.9 609.4 L578.3 605 L572.8 599.5 L566.1 600.6 L560.6 603.9 L558.5 607.3 L556.2 612.7 L557.6 618.5 L557.3 623.7 L561 625.7 L566.1 628.1 L560.6 634.8 L561.4 638.7 L563.9 643.6 L567.2 648 L560.6 652.4 L555.1 648 L552.2 642.3 L549.6 637 L543 633.7 L539.5 635.6 L534.1 637 L529.2 640.2 L525.3 641.4 L516.5 642.5 L513.7 640.2 L509 637.3 L505.4 634.8 L503.8 628.6 L501 623.7 L499.9 617.1 L494.8 616.7 L490 614.9 L491.4 617.3 L487.6 621.4 L483.8 624.9 L484.3 631.4 L486.3 637.6 L484.8 644 L481.7 648.3 L479.6 653.7 L478.7 657.9 L473.6 659.2 L469.4 654.7 L467.2 650.3 L466 642.7 L469.8 635 L469.4 628.8 L468.5 622.3 L466.5 619.4 L463.4 614.7 L463.6 609.3 L462.2 604.6 L455.8 599.5 L448.2 603.3 L443.4 603.7 L435.4 604.5Z" fill="#9a8888" stroke="rgba(255,255,255,0.72)" stroke-width="1.1" stroke-linejoin="round"/>
<path d="M297.5 556.9 L300.5 559.6 L305.2 562.4 L309.6 566.8 L309.3 572.7 L307.9 577.6 L307.4 582.3 L309.8 587.8 L312.9 592.2 L308.5 599.9 L303 606.6 L299.7 611 L297.5 613.2 L291.7 614.7 L285.3 617.6 L277.6 622 L276.1 617.4 L274.3 613.2 L269.5 613.2 L263.2 611 L262 605.3 L261 599.9 L263.9 595 L266.6 591.1 L262.1 587.8 L257.7 586.7 L256.6 582.3 L261.8 581.3 L265.4 580.1 L267.2 575 L269.9 571.3 L273 568.8 L276 565.4 L280.9 562.4 L287.5 560.2 L291.9 558.6Z" fill="#999999" stroke="rgba(255,255,255,0.72)" stroke-width="1.1" stroke-linejoin="round"/>
<path d="M406.7 531.5 L413.3 533.7 L419.9 535.1 L424.4 535.9 L428.5 531.2 L433.2 528.2 L437.6 523.8 L442 520.5 L445.6 519 L449.6 515.7 L455.3 513.9 L456.8 519.6 L458.6 522.7 L455.7 527.4 L454.6 531.7 L453.1 535.9 L452 544.8 L454.9 550.6 L456.4 555.8 L455.3 562.4 L447.5 564.6 L444.1 562 L439.8 558 L431 559.1 L424.4 553.6 L417.7 550.3 L413.3 542.6 L408.9 540.4 L408.2 535.8Z" fill="#999393" stroke="rgba(255,255,255,0.72)" stroke-width="1.1" stroke-linejoin="round"/>
<path d="M458.6 502.8 L458.7 496.8 L460.5 493.4 L460.3 488.8 L461.9 483 L470.7 484.1 L475.2 483 L483 483.6 L488.4 483 L491.7 477.5 L496.1 480.7 L499.4 483 L506 484 L510 485.2 L504.1 485.3 L499.7 484.6 L494.2 484.1 L490 482.6 L498.8 483.7 L504 484.2 L512.1 482.6 L510.2 488.8 L509.9 493.6 L506.2 498 L503.2 502.4 L505.2 506.7 L507.7 513.5 L507.3 519.6 L505.4 524.5 L506 531.2 L505 535.1 L505 541.1 L508 548.3 L508.8 553.2 L506 557.5 L504.6 560.7 L501 565.3 L494.3 564.4 L490 563.1 L495.2 563.5 L501.6 564.6 L496.3 563.3 L492.8 562.4 L488.7 560.9 L484 560.2 L483.4 552.3 L481.7 547 L480.5 543.3 L477.3 538.1 L473.6 534.3 L467.4 529.3 L463.1 525.9 L458.6 522.7 L456.8 519.6 L455.3 513.9 L456.3 506.9Z" fill="#999393" stroke="rgba(255,255,255,0.72)" stroke-width="1.1" stroke-linejoin="round"/>
<path d="M562.8 537.7 L564.2 533.4 L566.1 528.9 L570.6 527.8 L571.1 523.1 L570.4 517.2 L569.5 513.5 L573.9 510.2 L577.7 507.3 L582.3 503.8 L587.1 499.1 L589.4 493.9 L593.3 489.2 L600.1 490 L604.8 490.3 L610.2 492.6 L613.6 493.6 L618 495.4 L622.4 499.1 L627.2 501.5 L631.3 502.4 L635.1 501.9 L641.2 500.2 L643.8 506.3 L646.7 511.3 L647.8 516.3 L648.9 524.5 L647.6 531.7 L647.8 537.7 L649.1 542.8 L650.8 546.9 L652.8 552.1 L654.4 556.5 L651.9 563.5 L648.9 568.6 L645.3 574.3 L642.3 578.6 L637.8 578.9 L631.3 579.7 L627.4 579.2 L621.5 576.9 L618 576.4 L613.1 570.3 L609.2 567.5 L604.7 568.6 L599.4 569 L593.7 569.7 L594.8 562 L591.5 555.4 L584.9 549.9 L582.5 554.1 L578.3 557.6 L571.7 558.7 L568.8 561.1 L565.1 566.4 L561.7 569.7 L562.1 565.7 L560.6 559.8 L561.6 555.3 L565 548.8 L564.2 543.3Z" fill="#999393" stroke="rgba(255,255,255,0.72)" stroke-width="1.1" stroke-linejoin="round"/>
<path d="M716 422.6 L720.5 419.5 L726.9 415.8 L727.6 419.2 L733 417.2 L736.6 416.1 L740.6 413.8 L739.3 409 L739.2 401.5 L742.6 397.4 L746.8 402.1 L751.5 396 L757 396.7 L761.1 399.4 L764.5 400.8 L763.2 406.9 L764.5 412.4 L763.2 417.9 L767.9 421.3 L772.1 424 L767.9 430.2 L769.3 438.4 L766.6 443.8 L764.5 449.3 L763.8 456.2 L757 456.8 L755.6 450.7 L749.5 454.8 L750.9 463 L749.5 467.8 L744.7 466.9 L737.9 467.1 L737 463.5 L735.8 457.5 L734.7 451 L732.4 446.6 L726.9 439.7 L723.1 434.4 L718 430.2Z" fill="#9a9090" stroke="rgba(255,255,255,0.72)" stroke-width="1.1" stroke-linejoin="round"/>
<path d="M764.5 400.8 L769.3 397.4 L774.8 398.7 L778.9 393.9 L784.4 392.6 L784.4 397.4 L788.5 404.2 L793.9 406.2 L798 400.8 L802.1 400.1 L805.5 404.9 L807.6 409.7 L812.4 416.5 L813.1 421.3 L811 427.4 L805.6 428.6 L800.8 430.2 L800.1 435.6 L803.5 442.5 L809.7 445.9 L809 448.6 L804.9 449.6 L799.4 452.1 L798 457.5 L792.5 458.1 L788.5 458.9 L785.7 463.7 L778.9 465 L776.8 462 L773.4 457.5 L764.5 456.2 L763.8 449.3 L766.6 443.8 L769.3 438.4 L767.9 430.2 L772.1 424 L767.9 421.3 L763.2 417.9 L764.5 412.4 L763.2 406.9Z" fill="#9a9191" stroke="rgba(255,255,255,0.72)" stroke-width="1.1" stroke-linejoin="round"/>
<path d="M813.1 421.3 L818.5 422.6 L822.5 428.5 L824.7 434.3 L821.3 441.1 L819.5 445.2 L816.5 450.7 L817.9 453.4 L825.4 452.1 L831.5 457.5 L832.9 464.4 L829.5 471.2 L828.1 479.4 L825.4 486.2 L821.3 484.9 L817.4 481.5 L813.1 479.4 L809.8 475.7 L805.6 473.2 L807.6 465.7 L802.1 460.3 L798 457.5 L799.4 452.1 L804.9 449.6 L809 448.6 L809.7 445.9 L803.5 442.5 L800.1 435.6 L800.8 430.2 L805.6 428.6 L811 427.4Z" fill="#979595" stroke="rgba(255,255,255,0.72)" stroke-width="1.1" stroke-linejoin="round"/>
<path d="M746.6 546.6 L750.7 542 L753.2 537.7 L759.5 535.2 L763.7 532.6 L768.7 528.9 L775 529.8 L779.6 530.8 L784.1 531.1 L790.5 534.5 L795.2 537.7 L797.7 542.8 L800.7 546.6 L801.6 551.9 L804 557.6 L806.9 560.7 L810 565.9 L812.8 568.6 L815.5 573.8 L818.4 577.5 L810.6 581.9 L804 584.7 L798.5 585.2 L796.3 591.3 L795.2 595.3 L790.1 595 L784.5 593.2 L780.9 594.4 L775.3 593.1 L772.3 589.6 L768.7 585.4 L766 582.6 L762.9 576.9 L761 573.2 L758.2 567.6 L757.2 565.1 L753.2 560 L755.1 564.6 L759.4 569.9 L762.1 575.3 L757.9 570 L755.4 564.2 L752.6 561.9 L748.8 557.6 L746.9 551.1Z" fill="#9a8888" stroke="rgba(255,255,255,0.72)" stroke-width="1.1" stroke-linejoin="round"/>
<path d="M795.2 595.3 L800.7 597.5 L804.8 599.4 L810.6 600.8 L815.7 600.5 L823.9 600.8 L827.9 600.8 L831.8 601.9 L837.1 604.1 L843.8 605.7 L848.1 607.5 L852.5 606.1 L859.2 606.3 L864 606.1 L870.2 607.5 L874.6 609.7 L880.6 611.1 L884.6 612.6 L889 614.1 L887.9 621.8 L881.3 624 L877.6 624.9 L872.4 628.4 L868.3 632.8 L864.7 635 L859.2 641.7 L860.3 648.3 L865.8 651.6 L872.1 653.8 L876.8 654.9 L884.6 657.1 L883.5 661.5 L878.7 664.8 L876.8 668.1 L872.4 671.9 L869.1 674.8 L868 682.5 L864.7 684.7 L861.4 692.4 L862.7 697.9 L861.7 701.3 L862.2 707.4 L863.6 712.3 L860.3 717.8 L854.7 717.4 L850.4 715.6 L842.6 712.3 L837.1 713.4 L832.7 717.8 L837.1 720 L834.9 726.6 L831.6 724.4 L829 720.2 L825 716.7 L824.6 711.1 L822.8 705.7 L822.3 700.6 L819.5 694.6 L818.8 690 L816.1 683.6 L817.4 676.3 L817.3 671.9 L817.2 665.9 L818.3 661.8 L820.4 656.4 L820.6 652.7 L820.4 647.7 L821.7 640.6 L815 636.1 L810.6 634.9 L804 635 L798.2 635.6 L791.9 636.1 L786.7 633.4 L783 631.7 L778.6 625.1 L783 619.6 L790.8 618.5 L791.9 613 L795.5 611.2 L799.6 607.5 L797 600.5Z" fill="#9b9090" stroke="rgba(255,255,255,0.72)" stroke-width="1.1" stroke-linejoin="round"/>
<path d="M860.3 648.3 L859.2 641.7 L864.7 635 L868.3 632.8 L872.4 628.4 L877.6 624.9 L881.3 624 L887.9 621.8 L894.5 625.1 L896.9 628.4 L901.1 631.7 L896 633.8 L892.3 637.2 L891.2 643.9 L896.3 646.7 L898.9 649.4 L902.8 651.4 L907.7 652.7 L914.4 653.8 L915.5 658.2 L921 660.4 L919.9 668.1 L925.4 674.8 L927.6 680.3 L926.8 685 L924.3 690.2 L924.3 697.9 L921.5 702.3 L918.7 707.1 L917.7 711.2 L914.4 707.9 L911.3 705.3 L905.5 703.5 L900.3 701.9 L896.7 701.3 L890.1 699 L885.1 700.5 L879 704.6 L877.9 701.3 L878.5 696.5 L881 690.3 L881.3 685.8 L877.1 685.3 L872.4 683.6 L868 682.5 L869.1 674.8 L872.4 671.9 L876.8 668.1 L878.7 664.8 L883.5 661.5 L884.6 657.1 L876.8 654.9 L872.1 653.8 L865.8 651.6Z" fill="#9a8888" stroke="rgba(255,255,255,0.72)" stroke-width="1.1" stroke-linejoin="round"/>
<path d="M889 614.1 L894.4 613.1 L897.3 612.6 L903.3 613 L908 614.4 L912.2 615.4 L916.6 616.3 L921.3 619 L927.6 622.9 L933.3 623.9 L939 623.9 L943.1 624 L949.3 623.7 L956.3 622.9 L964 626.2 L966.2 632.8 L965.2 638.5 L964 643.9 L962.9 650.5 L958.4 653.5 L951.9 656 L947.4 659.5 L945.3 662.6 L940.1 665.8 L936.4 668.1 L934.3 672.5 L930.1 676.3 L927.6 680.3 L925.4 674.8 L919.9 668.1 L921 660.4 L915.5 658.2 L914.4 653.8 L907.7 652.7 L902.8 651.4 L898.9 649.4 L896.3 646.7 L891.2 643.9 L892.3 637.2 L896 633.8 L901.1 631.7 L896.9 628.4 L894.5 625.1 L887.9 621.8Z" fill="#9a8888" stroke="rgba(255,255,255,0.72)" stroke-width="1.1" stroke-linejoin="round"/>
<path d="M863.6 581 L872.4 579.9 L878 578.1 L885.7 577.7 L891.3 576.7 L898.9 576.6 L903.1 579.9 L907.7 582.1 L911.1 588.7 L908.8 596.4 L914.7 595.5 L919 593.8 L923.2 593.1 L927.3 591.8 L931.2 590.3 L936.4 589.8 L940.6 588.9 L947 586.4 L951.9 585.4 L956.2 589.9 L960.7 593.1 L962.9 599.7 L961.3 605.1 L959.6 610.8 L957.9 616 L956.3 622.9 L949.3 623.7 L943.1 624 L939 623.9 L933.3 623.9 L927.6 622.9 L921.3 619 L916.6 616.3 L912.2 615.4 L908 614.4 L903.3 613 L897.3 612.6 L894.4 613.1 L889 614.1 L884.6 612.6 L880.6 611.1 L874.6 609.7 L870.2 607.5 L873.1 602.9 L875.7 599.7 L871.3 595.3 L863.6 593.1 L861.4 587.6Z" fill="#9a8a8a" stroke="rgba(255,255,255,0.72)" stroke-width="1.1" stroke-linejoin="round"/>
<path d="M912.2 560 L916.6 566.6 L922.3 569.2 L926.5 569.9 L929.8 577.7 L935.3 582.1 L936.4 589.8 L940.6 588.9 L947 586.4 L951.9 585.4 L956.2 589.9 L960.7 593.1 L962.9 599.7 L961.3 605.1 L959.6 610.8 L957.9 616 L956.3 622.9 L964 626.2 L966.2 632.8 L965.4 634.4 L967.5 629.9 L968.4 625.3 L972 621.6 L977.6 618.2 L981.2 616.2 L986.5 613.9 L989.7 611.1 L991.1 607.6 L993.8 602.9 L1000.9 599.9 L1004.7 597.9 L1010.1 594.8 L1009 586.7 L1007.1 580.7 L1005 576.6 L1005.4 570.4 L1007.3 564.8 L1007 560.3 L1003.5 554.2 L1000.9 550.2 L997.8 546.1 L992.8 543 L987.9 544.4 L980.6 547.1 L974.5 547.4 L970.5 549.1 L964.9 548.1 L958.3 548.1 L953.7 546.9 L949.1 545.1 L944.9 545.3 L940 546.1 L944.3 546.4 L949 545.8 L955.3 546.1 L959.1 546.4 L963.7 546.2 L969 545.5 L973.6 545.6 L978.5 546.1 L982.8 546.6 L976.4 546.3 L970.7 546.1 L965.4 546.8 L960.7 546.6 L953.9 548.3 L949.7 549.9 L944 548.4 L938.6 546.6 L931.6 544.5 L927.6 542.2 L923.8 544.5 L920.6 548.8 L918.2 551.3 L915 554.1 L911.1 557.6Z" fill="#9a8888" stroke="rgba(255,255,255,0.72)" stroke-width="1.1" stroke-linejoin="round"/>
<path d="M1010.1 594.8 L1015.5 594.7 L1021.5 594.4 L1025 595.8 L1031.4 595.3 L1034.5 595.8 L1041.1 595.3 L1045.6 595.8 L1046.6 600.9 L1040.5 607 L1037.7 609.8 L1035.4 615.1 L1035.4 621.2 L1029.3 623.3 L1023.3 629.3 L1018.8 626.1 L1015.1 624.3 L1009.7 623.3 L1002.9 622.2 L994.8 624.3 L989.9 624.8 L983.7 625.3 L980.5 621.3 L977.6 618.2 L981.2 616.2 L986.5 613.9 L989.7 611.1 L991.1 607.6 L993.8 602.9 L1000.9 599.9 L1004.7 597.9Z" fill="#9b9090" stroke="rgba(255,255,255,0.72)" stroke-width="1.1" stroke-linejoin="round"/>
<path d="M1050.7 598.9 L1054.1 595.8 L1058.8 592.7 L1061.8 590.8 L1065.5 587.5 L1070 585.7 L1073.9 587.4 L1080.1 588.7 L1086.2 593.8 L1091.3 600.9 L1094.5 606.3 L1097.4 609 L1102.3 612.9 L1106.5 614.1 L1111.5 616.1 L1116.7 616.1 L1120.7 619.2 L1121.5 623.5 L1124.8 629.3 L1116.7 628.3 L1112.8 629.7 L1106.5 629.3 L1103.7 634.2 L1101.4 637.5 L1097 639 L1090.3 642.5 L1085.4 644.9 L1080.1 647.6 L1076 646.6 L1070.1 645.2 L1065.9 643.6 L1062.2 643.7 L1056.8 643.6 L1053.7 635.4 L1045.6 632.4 L1044.4 629.2 L1041.5 624.3 L1035.4 621.2 L1035.4 615.1 L1037.7 609.8 L1040.5 607 L1046.6 600.9 L1045.6 595.8Z" fill="#9e9e9e" stroke="rgba(255,255,255,0.72)" stroke-width="1.1" stroke-linejoin="round"/>
<path d="M968.4 625.3 L972 621.6 L977.6 618.2 L980.5 621.3 L983.7 625.3 L989.9 624.8 L994.8 624.3 L1002.9 622.2 L1009.7 623.3 L1015.1 624.3 L1018.8 626.1 L1023.3 629.3 L1029.3 623.3 L1035.4 621.2 L1041.5 624.3 L1044.4 629.2 L1045.6 632.4 L1053.7 635.4 L1056.8 643.6 L1062.2 643.7 L1065.9 643.6 L1070.1 645.2 L1076 646.6 L1080.1 647.6 L1076 652.7 L1067.9 654.7 L1063.8 658.4 L1061.8 661.8 L1064.9 670 L1072 675 L1064.6 678.1 L1059.8 680.1 L1055.7 675 L1050 673.9 L1045.6 673 L1039.8 674.2 L1035.4 674 L1029.6 672.5 L1025.3 672 L1021.2 666.9 L1018.2 660.8 L1014.4 658.1 L1010.1 656.8 L1003.3 656.2 L998.9 656.8 L996.9 650.7 L988.7 647.6 L983.4 646.9 L978.6 645.6 L975.6 641.3 L973.5 637.5 L968.4 634.4 L965.4 634.4 L967.5 629.9Z" fill="#9c9393" stroke="rgba(255,255,255,0.72)" stroke-width="1.1" stroke-linejoin="round"/>
<path d="M965.4 634.4 L968.4 634.4 L973.5 637.5 L975.6 641.3 L978.6 645.6 L983.4 646.9 L988.7 647.6 L996.9 650.7 L998.9 656.8 L1003.3 656.2 L1010.1 656.8 L1014.4 658.1 L1018.2 660.8 L1021.2 666.9 L1025.3 672 L1027.3 678.1 L1020.2 675 L1013.1 675 L1010.2 679.1 L1007 685.2 L1001.8 685.7 L996.9 688.2 L995.2 693.4 L992.8 700.4 L991.9 705.5 L990.6 708.5 L988.7 713.6 L983.7 708.5 L977.6 705.5 L972.8 707.3 L966.4 707.5 L960.3 702.4 L954.2 697.4 L946.1 696.4 L940 694.3 L943.3 696.1 L947.8 698.5 L953.4 699.5 L958.1 701.3 L961.8 703.2 L966.4 704.1 L971.7 706.8 L966.5 705.6 L962.9 704.6 L957.4 699 L951.9 701.3 L945.3 696.8 L940.8 701.3 L935.5 700.8 L932 699 L924.3 697.9 L924.3 690.2 L926.8 685 L927.6 680.3 L930.1 676.3 L934.3 672.5 L936.4 668.1 L940.1 665.8 L945.3 662.6 L947.4 659.5 L951.9 656 L958.4 653.5 L962.9 650.5 L964 643.9 L965.2 638.5 L966.2 632.8Z" fill="#9b9797" stroke="rgba(255,255,255,0.72)" stroke-width="1.1" stroke-linejoin="round"/>
<path d="M990.8 660.8 L995.5 659.1 L998.9 656.8 L1003.3 656.2 L1010.1 656.8 L1014.4 658.1 L1018.2 660.8 L1021.2 666.9 L1017 668.9 L1013.1 672 L1008.9 670.4 L1005 667.9 L998.9 666.9 L993.8 663.9Z" fill="#1c1c1c"/>
<path d="M508.8 514.6 L512.1 515.7 L512.4 519.3 L514 523.9 L516.5 528.9 L516.6 533.5 L516.9 538.8 L512.1 541.1 L505 541.1 L507.7 533.3 L506.6 524.5 L506.8 519.4Z" fill="#1e1e1e"/>
<path d="M593.7 569.7 L599.4 569 L604.7 568.6 L609.2 567.5 L612.9 571.9 L618 576.3 L623.4 577.6 L626.4 577.9 L631.3 579.6 L636.1 579.3 L642.3 578.5 L645.5 573.9 L648.9 568.6 L652.1 561.7 L654.4 557.5 L660.5 554.9 L664.4 553.1 L669.6 552.2 L673.2 549.8 L679.8 552 L684.7 549.4 L688.6 547.6 L692.4 547.8 L698.6 547.6 L704.8 549.5 L708.5 550.9 L714.3 547.7 L719.5 546.5 L724 544.7 L728.6 544.3 L732.8 543.2 L739.1 541.5 L743.2 541.5 L750 538.8 L751 538.8 L753.2 542.2 L746.6 546.6 L746.9 551.1 L748.8 557.6 L752.6 561.9 L755.4 564.2 L757.9 570 L762.1 575.3 L761 573.2 L762.9 576.9 L766 582.6 L768.7 585.4 L772.3 589.6 L775.3 593.1 L768.7 596.4 L761 598.6 L755.8 599.7 L752.1 601.9 L746.6 597.5 L740 595.3 L744.3 595.9 L750 598.4 L741.6 596.1 L738.6 601 L732.8 606.1 L726.6 609.3 L721.7 612.7 L715.9 614.1 L710.7 616 L705.3 619.8 L701.9 623.7 L699.6 627.5 L695.6 631.2 L693.1 634.8 L689.9 637.5 L684.2 640.3 L681.5 644.2 L677.6 646.9 L673.2 644.7 L666.6 650.2 L659.9 652.4 L656.6 645.8 L658.4 640.5 L659.9 637 L661.1 628.1 L661 623.5 L659.9 618.2 L653.3 614.9 L648.9 614.9 L647.8 622.6 L640.1 619.3 L635.2 622.2 L631.3 622.6 L627.4 620.5 L622.4 619.3 L618 621.2 L613.6 623.7 L607 621.5 L603.3 618.8 L600.4 614.9 L593.7 610.5 L594.1 605.5 L595.9 601.7 L590.4 595 L588.2 587.3 L592.6 580.7 L591.5 574.1Z" fill="#971313"/>
<path d="M628.9 703.5 L631.9 705.8 L630.3 711.6 L629.6 716.5 L635.7 721.1 L638.8 720.3 L645.6 718.8 L649.6 720.4 L654.8 721.1 L656.3 727.2 L662.4 731.8 L663.6 735.7 L667 740.9 L671.6 748.5 L673.1 754.6 L673.9 759.2 L676.2 765.3 L682.3 769.2 L686.9 776 L686.9 777.6 L680 778.3 L679.2 785.2 L681.5 791.3 L681.9 795.5 L683.1 800.5 L679.2 805 L671.6 801.2 L663.2 800.5 L656.3 796.6 L650.2 798.9 L645.6 794.4 L641.8 789.8 L638.7 785.7 L636.5 782.1 L629.6 777.6 L622.7 773 L617.4 773 L615.1 765.3 L614.4 759.2 L609 754.7 L609.6 750.2 L608.9 743.3 L608.4 739.9 L609 733.3 L611.9 729.5 L613.9 724.1 L618.2 719.5 L620.5 715.9 L623.6 712.9 L625.5 707.2Z" fill="#989898" stroke="rgba(255,255,255,0.55)" stroke-width="1" stroke-linejoin="round"/>
<path d="M654.8 721.1 L655.8 717 L658.8 711.1 L659.4 707.3 L662.4 703.7 L664.7 698.2 L667 692.1 L674.7 689.8 L677.7 683.7 L682.9 682.4 L686.9 679.8 L694.5 679.8 L697.6 684.4 L703.7 685.2 L706.7 684.4 L709.8 690.5 L714.4 692.1 L712.5 698.5 L711.3 702.7 L715.9 707.3 L717.4 713.4 L715.9 721.1 L708.2 724.1 L704.1 728.2 L702.1 731.8 L703.7 739.4 L708.2 739.4 L710.5 745.5 L706.7 751.6 L703.6 755.3 L700.6 759.2 L697.6 766.9 L696 773 L699.1 777.6 L693.8 778.5 L686.9 777.6 L685.4 773.8 L682.3 769.2 L676.2 765.3 L673.9 759.2 L673.1 754.6 L671.6 748.5 L667 740.9 L663.6 735.7 L662.4 731.8 L656.3 727.2Z" fill="#989898" stroke="rgba(255,255,255,0.7)" stroke-width="1.1" stroke-linejoin="round"/>
<path d="M462.6 439.8 L467 441.8 L473.6 445.3 L480.3 450.8 L484.2 453.3 L489.1 457.4 L494.2 459.6 L497.9 461.8 L501.7 464.3 L506.7 465.1 L511.1 467.3 L515.5 470.6 L519.7 472.8 L524.4 476.2 L527.7 479.5 L522.2 481.7 L517 482.6 L511.1 482.8 L502.3 481.7 L498.3 478.9 L495.7 475.1 L490.2 468.4 L484.7 462.9 L478.1 459.6 L473.6 454.1 L471.2 451.3 L467 447.5Z" fill="#000000"/>
<path d="M456 450.8 L464.8 451.9 L469.8 455.1 L473.6 456.3 L475.9 460.7 L469.2 459.6 L462.6 457.4 L457.1 454.1Z" fill="#050505"/>
<path d="M311.9 522.6 L316.7 522.6 L323.6 522.7 L326.5 523 L333.6 521.7 L338 522.6 L339.2 526.1 L334.9 526.9 L330.4 528.6 L326.1 529.7 L321.4 535.6 L314.3 536.8 L313.1 530.9 L316.6 527.3Z" fill="#0a0a0a"/>
<path d="M416.5 690.9 L420.2 689.4 L423.4 686.6 L427.9 683.3 L432.5 678 L436 674.4" fill="none" stroke="#0c0c0c" stroke-width="2" stroke-linejoin="round"/>
<path d="M421.5 696 L421.1 700.6 L420.8 706.1" fill="none" stroke="#0c0c0c" stroke-width="1.6" stroke-linejoin="round"/>
<path d="M471.1 698.5 L474.3 694.3 L478.7 688.4 L479.7 682.1 L482.9 678.7 L483.8 673.1 L486.6 668.7 L491.9 664.2" fill="none" stroke="#0c0c0c" stroke-width="2" stroke-linejoin="round"/>
<path d="M483.8 690.9 L487.4 695.8 L488.8 699.8" fill="none" stroke="#0c0c0c" stroke-width="1.6" stroke-linejoin="round"/>
<path d="M737.9 438.4 L739.2 434.1 L742.6 429.5 L746.1 430.2 L747.4 437.7 L742.6 439.7 L737.9 438.4" fill="none" stroke="rgba(255,255,255,0.8)" stroke-width="1" stroke-linejoin="round"/>
<path d="M698.2 424 L701.6 430.2 L698.9 438.4 L702.3 446.6 L700.9 454.8 L702.6 460.8 L703.7 464.4 L697.5 469.8 L697.3 474.2 L695.5 479.4 L690 481.5" fill="none" stroke="rgba(255,255,255,0.8)" stroke-width="1" stroke-linejoin="round"/>
<path d="M697.5 469.8 L702.8 470.3 L707.8 471.2 L712.7 470.4 L718.7 471.2 L726.9 467.8 L733.7 468 L737.9 467.1" fill="none" stroke="rgba(255,255,255,0.8)" stroke-width="1" stroke-linejoin="round"/>
<path d="M749.5 467.8 L752.2 463 L757 456.8 L764.5 456.2 L773.4 457.5 L776.8 462 L778.9 465 L785.7 463.7 L791.9 469.8 L791.2 478 L796 483.5 L791.2 490.3 L784.4 495.8 L777.5 498.5 L776.8 504 L772.6 505.8 L766.6 506.8 L760.4 507 L755.6 505.4 L751.1 508.1 L744.7 510" fill="none" stroke="rgba(255,255,255,0.8)" stroke-width="1" stroke-linejoin="round"/>
<path d="M818.5 422.6 L812.4 416.5" fill="none" stroke="rgba(255,255,255,0.8)" stroke-width="1" stroke-linejoin="round"/>
<path d="M829.5 479.4 L834.5 477 L839.1 475.3 L844.3 476.7 L850 478" fill="none" stroke="rgba(255,255,255,0.8)" stroke-width="1" stroke-linejoin="round"/>
<path d="M593.7 610.5 L594.1 605.5 L595.9 601.7 L590.4 595 L588.2 587.3 L592.6 580.7 L591.5 574.1 L593.7 569.7 L599.4 569 L604.7 568.6 L609.2 567.5 L612.9 571.9 L618 576.3 L623.4 577.6 L626.4 577.9 L631.3 579.6 L636.1 579.3 L642.3 578.5 L645.5 573.9 L648.9 568.6 L652.1 561.7 L654.4 557.5 L660.5 554.9 L664.4 553.1 L669.6 552.2 L673.2 549.8 L679.8 552 L684.7 549.4 L688.6 547.6 L692.4 547.8 L698.6 547.6 L704.8 549.5 L708.5 550.9 L714.3 547.7 L719.5 546.5 L724 544.7 L728.6 544.3 L732.8 543.2 L739.1 541.5 L743.2 541.5 L750 538.8 L751 538.8 L753.2 542.2 L746.6 546.6 L746.9 551.1 L748.8 557.6 L752.6 561.9 L755.4 564.2 L757.9 570 L762.1 575.3 L761 573.2 L762.9 576.9 L766 582.6 L768.7 585.4 L772.3 589.6 L775.3 593.1" fill="none" stroke="rgba(255,165,165,0.9)" stroke-width="1.3" stroke-linejoin="round"/>
<path d="M360.4 573.5 L364.6 573.1 L368.9 572.8 L374.7 571.3 L375.8 564.6 L379.3 560.8 L382.4 558 L386.6 556.1 L391.3 551.4 L397.9 550.3 L404.5 549.2 L407.8 546.6 L413.3 542.6" fill="none" stroke="rgba(255,255,255,0.72)" stroke-width="1" stroke-linejoin="round"/>
<path d="M397.9 550.3 L398.3 557.4 L400.1 562.4 L401.6 567.4 L402.3 571.3 L408.9 573.5 L413.3 571.3 L414.4 562.4 L416.7 556.7 L419.9 551.4 L424.4 553.6" fill="none" stroke="rgba(255,255,255,0.72)" stroke-width="1" stroke-linejoin="round"/>
<path d="M374.7 571.3 L382.4 574.6 L387.6 571.6 L391.3 571.3 L400.1 571.3" fill="none" stroke="rgba(255,255,255,0.72)" stroke-width="1" stroke-linejoin="round"/>
<path d="M408.9 588.9 L413.3 582.3 L410.6 578.2 L408.9 573.5" fill="none" stroke="rgba(255,255,255,0.72)" stroke-width="1" stroke-linejoin="round"/>
<path d="M404.5 597.7 L406.7 601.9 L408.9 606.6 L415.5 608.8 L417.7 604.4 L423.7 604.4 L431 604.4" fill="none" stroke="rgba(255,255,255,0.72)" stroke-width="1" stroke-linejoin="round"/>
<path d="M431 604.4 L429.9 595.5 L433.7 589.3 L437.6 584.5 L441.5 579.7 L445.9 577 L448.6 573.5 L451.2 567.9 L455.3 562.4" fill="none" stroke="rgba(255,255,255,0.72)" stroke-width="1" stroke-linejoin="round"/>
<path d="M455.3 562.4 L460.5 565.3 L466.3 566.8 L470.7 565.4 L477.3 562.4 L484 560.2" fill="none" stroke="rgba(255,255,255,0.72)" stroke-width="1" stroke-linejoin="round"/>
<path d="M479.2 500.4 L484.7 494.9 L490.3 494.6 L495.7 492.7 L502.3 489.4 L506.2 488.7 L511.1 486.1 L514.9 486.1 L520 488.3 L520.3 493 L522.2 497.1 L515.5 502.6 L511.1 507 L506.7 511.4 L500.1 515.9 L493.5 514.7 L489.1 510.3 L480.3 511.4 L479.3 506.8 L479.2 500.4" fill="none" stroke="rgba(255,255,255,0.72)" stroke-width="1" stroke-linejoin="round"/>
<path d="M490.2 502.6 L493.5 498.2 L499.7 498.3 L504.5 497.1 L507.8 500.4 L504.5 507 L497.9 512.5 L492.4 513.6 L489.1 507 L490.2 502.6" fill="none" stroke="rgba(255,255,255,0.72)" stroke-width="1" stroke-linejoin="round"/>
<path d="M527.5 478.1 L530.4 474.1 L534.1 470.4 L540.8 475.9 L544.5 477.2 L549.6 478.1" fill="none" stroke="rgba(255,255,255,0.72)" stroke-width="1" stroke-linejoin="round"/>
<path d="M517.6 484.8 L522.1 482.7 L525.9 481.6 L530.8 480.4 L536 480.8 L543 482.6 L539.1 487.2 L535.2 490.3 L533.9 495.4 L534.9 499.7 L534.1 504.6 L535.7 508.1 L536.3 513.5 L532.5 516 L528.6 520.1 L522.7 520.5 L518.7 522.3" fill="none" stroke="rgba(255,255,255,0.72)" stroke-width="1" stroke-linejoin="round"/>
<path d="M543 482.6 L547.1 484.9 L552.4 487 L556.2 489.2 L558.4 495.5 L560.6 499.1" fill="none" stroke="rgba(255,255,255,0.72)" stroke-width="1" stroke-linejoin="round"/>
<path d="M568.4 511.3 L569.3 516.1 L569.2 521.7 L570.6 527.8 L566.1 528.9 L564.2 533.4 L562.8 537.7 L564.2 543.3 L565 548.8 L561.6 555.3 L560.6 559.8 L562.1 565.7 L561.7 569.7" fill="none" stroke="rgba(255,255,255,0.72)" stroke-width="1" stroke-linejoin="round"/>
<path d="M570.6 527.8 L577.5 526.7 L582.7 524.5 L588.6 522.7 L591.5 520.1 L597.1 518.3 L600.4 515.7 L604.8 509 L608.5 505.8 L613.6 503.5 L617.9 500.7 L622.4 499.1 L627.2 501.5 L631.3 502.4 L635.1 501.9 L641.2 500.2 L642.3 495.8" fill="none" stroke="rgba(255,255,255,0.72)" stroke-width="1" stroke-linejoin="round"/>
<path d="M592 472.6 L599.9 473.5 L604.8 473.7 L608.4 475.4 L613.6 475.9 L618.8 476.9 L622.4 479.3 L631.3 478.1 L633 483.1 L635.7 487 L637.6 490.9 L642.3 495.8 L648 495.8 L653.3 495.8 L660.1 495.4 L664.4 494.7 L668.8 490.3 L672.9 488.9 L679.8 489.2" fill="none" stroke="rgba(255,255,255,0.72)" stroke-width="1" stroke-linejoin="round"/>
<path d="M620.2 432.9 L618.4 437.9 L618 442.8 L616.6 449.7 L616.9 455 L624.6 458.3 L631.3 462.7 L636.8 467.1 L634.3 471.9 L631.3 478.1" fill="none" stroke="rgba(255,255,255,0.72)" stroke-width="1" stroke-linejoin="round"/>
<path d="M636.8 467.1 L639.1 462.8 L641.2 456.1 L648.9 451.7 L653.8 452.5 L659.9 451.7 L666.1 453.2 L673.2 453.9 L676.3 449.8 L679.8 447.2 L676.1 440.7 L672.1 436.2" fill="none" stroke="rgba(255,255,255,0.72)" stroke-width="1" stroke-linejoin="round"/>
<path d="M673.2 453.9 L670.3 459 L666.6 462.7 L667.3 466.5 L668.8 471.5 L672.4 475 L677.6 480.4 L678.8 484.7 L679.8 489.2 L681.6 492.5 L686.9 496.8 L688.6 500.2 L693.4 501 L698.6 503.5 L700.3 507.5 L700.9 511.8 L703.7 515.6 L705.2 521.2 L702.7 528.6 L700.8 533.3 L700.8 537.9 L702.1 543.7 L701.9 547.7" fill="none" stroke="rgba(255,255,255,0.72)" stroke-width="1" stroke-linejoin="round"/>
<path d="M677.6 480.4 L683 478.9 L688.6 479.3 L691.7 476.1 L696.4 473.7 L698.6 469.3 L704.4 469.3 L710.7 469.3 L714.8 468.8 L720.3 467.2 L724 466 L729.7 465.2 L735 464.9" fill="none" stroke="rgba(255,255,255,0.72)" stroke-width="1" stroke-linejoin="round"/>
<path d="M699.7 423 L699.2 430.2 L698.6 436.2 L700.5 440.3 L703 447.2 L702.8 451.6 L703.1 458 L701.9 462.7 L698.6 469.3" fill="none" stroke="rgba(255,255,255,0.72)" stroke-width="1" stroke-linejoin="round"/>
<path d="M641.2 500.2 L643.8 506.3 L646.7 511.3 L647.8 516.3 L648.9 524.5 L647.6 531.7 L647.8 537.7 L649.1 542.8 L650.8 546.9 L652.8 552.1 L654.4 556.5" fill="none" stroke="rgba(255,255,255,0.72)" stroke-width="1" stroke-linejoin="round"/>
<path d="M750 509 L743.8 511.3 L742.2 515.1 L741.6 520.1 L743.5 526.3 L743.8 531.1 L746.8 535 L750 537.7" fill="none" stroke="rgba(255,255,255,0.72)" stroke-width="1" stroke-linejoin="round"/>
<path d="M802.9 460.5 L803.5 464.4 L805.6 469.9 L806.2 473.7 L810.1 475.9 L815 480.4 L820.9 482.5 L825 485.9 L825.9 481.1 L827.2 475.9 L832.4 475.9 L839.3 474.8 L844.5 476.2 L849.3 476.6 L852.6 478.1 L855.9 482.3 L862.5 487 L870.2 482.6 L876.8 485.9" fill="none" stroke="rgba(255,255,255,0.72)" stroke-width="1" stroke-linejoin="round"/>
<path d="M786.3 464.9 L789.3 469.1 L793 471.5 L794.4 477.7 L795.2 484.8 L790.1 490 L787.5 493.6 L782.5 496.4 L778.6 498 L776.4 504.6 L771.3 505.7 L764.3 506.8 L757.1 508.9 L752.1 509 L746.2 510.5 L740 511.3" fill="none" stroke="rgba(255,255,255,0.72)" stroke-width="1" stroke-linejoin="round"/>
<path d="M740 511.3 L740.4 514.9 L742.7 520.3 L743.3 524.5 L744.1 531.2 L744.4 537.7" fill="none" stroke="rgba(255,255,255,0.72)" stroke-width="1" stroke-linejoin="round"/>
<path d="M876.8 485.9 L876.3 492.7 L876.8 498 L878 503.1 L879 511.3 L874.2 514.3 L869.2 515.4 L865.8 517.9 L858.8 521.1 L854.8 524.5 L855.7 530.9 L854.8 537.7 L851.4 538.2 L845.9 539.9 L839.6 541.6 L835.9 543.6 L830.5 546.6 L824.6 542.9 L819.5 539.9 L814.9 538.9 L809.6 537.5 L806.2 535.5 L800.2 534 L795.2 534.4" fill="none" stroke="rgba(255,255,255,0.72)" stroke-width="1" stroke-linejoin="round"/>
<path d="M879 511.3 L884.1 511.4 L890.1 513.5 L894.7 512.3 L898.9 511.3 L903.3 517.9 L906.1 520.9 L909.6 524.9 L914.4 528.9 L909.9 532.5 L904.4 537.7 L903.9 544.4 L903.3 548.8 L901.3 554.7 L898.9 557.6 L894.5 553.2 L890.1 546.6 L885.1 544.2 L880.4 543.1 L876.6 541.3 L872.4 539.9 L865.4 538.6 L860.8 538.9 L854.8 537.7" fill="none" stroke="rgba(255,255,255,0.72)" stroke-width="1" stroke-linejoin="round"/>
<path d="M903.3 517.9 L906.6 515.9 L912.5 514.2 L916.6 513.5 L923.8 512.2 L929.8 511.3 L932.5 506 L936.4 500.2 L939.9 498.4 L944.9 493.8 L947 491.8 L951.9 489.2 L956.6 488.9 L960.7 487 L965.8 490 L970.6 493.6" fill="none" stroke="rgba(255,255,255,0.72)" stroke-width="1" stroke-linejoin="round"/>
<path d="M850.4 413 L854 417.5 L857 420.8 L849.3 425.2 L850.3 429.5 L850.4 436.2 L855.2 436.9 L859.1 439.3 L863.6 440.6 L868.3 442.2 L874.6 442.8 L871.3 446 L865.8 449.5 L869 452.4 L872.4 456.1 L871.6 460.9 L869.1 467.1 L869.1 473.5 L869.3 478.3 L870.2 482.6" fill="none" stroke="rgba(255,255,255,0.72)" stroke-width="1" stroke-linejoin="round"/>
<path d="M876.8 485.9 L883.2 486.1 L890.1 484.8 L891.9 479.1 L893.4 473.7 L891 468.4 L890.1 462.7 L894.5 455 L898.4 454.7 L903.3 452.8 L910.2 453.5 L916.6 453.9" fill="none" stroke="rgba(255,255,255,0.72)" stroke-width="1" stroke-linejoin="round"/>
<path d="M898.9 557.6 L904.1 559.5 L907.7 559.8 L911.1 557.6" fill="none" stroke="rgba(255,255,255,0.72)" stroke-width="1" stroke-linejoin="round"/>
<path d="M795.2 534.4 L797.6 540.1 L800.7 546.6" fill="none" stroke="rgba(255,255,255,0.72)" stroke-width="1" stroke-linejoin="round"/>
<path d="M798.5 585.2 L804 584.7 L810.6 581.9 L818.4 577.5" fill="none" stroke="rgba(255,255,255,0.72)" stroke-width="1" stroke-linejoin="round"/>
<path d="M911.1 557.6 L913.5 561 L916.6 566.4 L920.6 568.5 L927.6 570.8 L930.8 575 L934.2 581.9 L936.4 588.5" fill="none" stroke="rgba(255,255,255,0.72)" stroke-width="1" stroke-linejoin="round"/>
<path d="M982.6 447.5 L986.3 450.4 L990.8 451.5 L997.9 452.5 L1003 451.7 L1007 449.5 L1013.4 448.1 L1018.2 448.5" fill="none" stroke="rgba(255,255,255,0.72)" stroke-width="1" stroke-linejoin="round"/>
<path d="M940 495.2 L943.7 493.7 L949.3 490.9 L952.2 488.1 L958.4 488.6 L962.3 488.1 L966.2 492.1 L970.5 494.2" fill="none" stroke="rgba(255,255,255,0.72)" stroke-width="1" stroke-linejoin="round"/>
<path d="M1010.1 518.5 L1006.9 521.2 L1003.3 524.9 L1000.9 528.7 L997.9 536.8 L992.8 541.9" fill="none" stroke="rgba(255,255,255,0.72)" stroke-width="1" stroke-linejoin="round"/>
<path d="M992.8 541.9 L997.2 545.5 L1000.9 551 L1003.5 553.7 L1007 557.9" fill="none" stroke="rgba(255,255,255,0.72)" stroke-width="1" stroke-linejoin="round"/>
<path d="M912.1 24 L907 25.4 L903 27.6 L899.1 30.1 L894.4 30.2 L890.9 31.8 L885.3 34.6 L881.6 35.7 L877.8 37.7 L872.7 40.3 L869.5 42.8 L865.2 44.4 L859 46.6 L854.7 50.4 L850.3 51.5 L846.3 54.3 L841.9 55.1 L837.3 58.4 L834 60.7 L828.8 61.9 L825 64.5 L820.9 65.5 L816.5 68 L814.3 69.6 L809.2 72 L805.1 74 L798.9 75.9 L795.8 76.9 L789.8 78.2 L785.8 79.9 L781.7 82.3 L776.8 84.1 L772.8 84.7 L767.6 87.2 L763 88.3 L758.8 88.9 L754 90.8 L748.5 91.5 L744 92.6 L744.3 98.2 L746 103.7 L747.4 109.8 L751.4 107.5 L755.5 105.2 L761.1 102.9 L763.6 108 L765.7 112.4 L767 117 L768.8 119.4 L770.5 124 L773.4 129.7 L774.8 133.8 L777.3 138.8 L779.4 142.7 L781.7 147.5 L780.1 152.6 L777.7 156.7 L775.1 160.6 L774.3 166.8 L771.4 171.5 L774.3 176.7 L776.6 181.3 L778.8 184.3 L780.6 188.2 L783.7 194.4 L785.9 197.5 L788.6 202.4 L791.6 206.8 L794.9 210.4 L797.3 213.8 L801.3 218.2 L803.4 220.8 L805.7 225.3 L809.2 229.9 L812.4 233.1 L816.5 236.5 L822.2 239 L825.3 241.7 L828.6 245.5 L833.3 247.1 L836.6 250.5 L839.1 253.8 L843.1 258.3 L845.4 261.4 L849.6 264.2 L851.7 268.2 L854.1 271.3 L857.6 274 L861.5 277.9 L864 281.3 L868.2 285.1 L871.9 288 L874.3 289.7 L879 292.3 L882.9 294 L887.8 297.7 L890.6 300.3 L895.2 302.6 L898.4 305.3 L901.7 309.3 L906.3 310.8 L911.5 315.1 L915.3 318.6 L918.9 322.5 L923.5 325.5 L928 328.2 L930.4 329.9 L935.9 334.1 L939.5 336.2 L945.3 335.6 L950.4 334.9 L954.9 334.3 L958.7 334.9 L964 334 L969.3 333.4 L973.8 332.8 L977.6 329 L978.9 325.9 L983.2 321.7 L985.1 318.9 L989.8 315.7 L992.5 312.1 L994.7 308.8 L997.9 305.5 L1001.3 301.9 L1003.6 296.3 L1004.9 291.6 L1005.7 287.2 L1005.9 283.4 L1008.1 277.9 L1013.3 278.9 L1017 278.5 L1022 278.3 L1026.4 279.1 L1032 280 L1035.2 280.2 L1039.2 279.6 L1044.7 280.2 L1049.3 281.3 L1052.8 283.1 L1057.5 284.5 L1062.8 286.1 L1068.2 286.9 L1072 289.3 L1076.5 291.5 L1080.6 292.1 L1084.9 293.1 L1090.5 295.1 L1095.5 296.6 L1098.6 297.2 L1103.9 296.4 L1107.6 298.9 L1113.5 299.9 L1117.8 299.7 L1122.2 299.7 L1126.3 300.4 L1131.7 301.9 L1135.1 303.6 L1140.3 304.1 L1145.1 306.4 L1149.1 307 L1153.9 309.7 L1156.5 310.4 L1162 311.9 L1165.8 313.3 L1170.1 314.3 L1174.3 315.9 L1179 317" fill="none" stroke="#7a7a7a" stroke-width="1.1" stroke-linejoin="round"/>
<path d="M898.4 305.3 L898.6 310.9 L899.3 316.8 L900.8 321.4 L900.6 325.6 L901.2 331.8 L901.8 336.2 L896.9 336.5 L891.5 337.6 L886.8 338.7 L883.4 339.5 L877.2 341.2 L873.3 340.7 L868.3 342.5 L864 343.1 L862.8 346.8 L860.5 350.9 L859.3 355.7 L857.4 359.8 L855.3 365.1 L853.6 367.9 L852.7 372.8 L850.3 377.4 L847 378.7 L842.5 380.5 L838.3 382.7 L833.7 386 L829.5 388.8 L826.3 389.1 L821.9 391 L817.4 393.1 L813.8 395.7 L809.2 398 L806.1 401.9 L801.9 407.1 L798.9 411.7" fill="none" stroke="#7a7a7a" stroke-width="1.1" stroke-linejoin="round"/>
<path d="M1083.6 30.9 L1087.6 33.9 L1091.2 36 L1094.3 38 L1099.5 42.5 L1102.3 43.8 L1105.5 46.8 L1109.8 48.9 L1113.2 51.6 L1117.9 54.9 L1120.6 60.2 L1122.2 65.4 L1125 67.7 L1126.7 72.3 L1128.3 77.4 L1131.7 82.3 L1135.2 86.5 L1136.8 90.4 L1139.4 95.3 L1142.3 99.2 L1145.4 102.9 L1148.3 106.7 L1151.2 109.2 L1156.4 113.1 L1159.9 116.3 L1162.5 119 L1166 123.5 L1168.5 118.8 L1170.6 116.2 L1172.4 111.7 L1176.3 107.7 L1179 102.9" fill="none" stroke="#7a7a7a" stroke-width="1.1" stroke-linejoin="round"/>
<path d="M373.4 130.4 L377.3 132.1 L381.6 133.8 L387.5 135.1 L393.6 135.1 L397.4 137.2 L399 141.1 L401.6 147.6 L404.5 151 L407.6 156.5 L407.8 159.8 L411.2 164.7 L409.8 170.1 L408.5 173.6 L409.2 179.2 L406.7 183.1 L406.3 188.4 L404.9 194.1 L404.3 199 L404.5 204.6 L405.7 207.2 L405.8 211.7 L407.4 217.1 L408.4 221.2 L409 227.5 L409 230.2 L411 235.8 L411.2 240.2 L408.8 245 L407 249.5 L405.5 252.2 L402.1 257.8 L400.9 260.9 L397.9 266.3 L395.6 269.4 L393.4 274.2 L390.6 277.9 L386.6 281.9 L384.3 286.9 L381.4 290.4 L378.5 293.6 L376.2 298.7 L373.4 301.9" fill="none" stroke="#555" stroke-width="1" stroke-linejoin="round"/>
<path d="M374.7 474.1 L379.9 471.3 L386.8 468.6 L393.5 467.7 L397.9 466.4 L404.5 471.9 L408.8 469.6 L414.4 467.5 L417.9 465.3 L422.2 460.9 L415.9 461.3 L411.1 460.9 L405.6 455.4 L408.1 451 L413.3 445.4 L417.5 442.8 L422.2 441 L426.6 446.6 L433.2 443.2 L436.2 448.8 L439.8 454.3 L443 456 L448.6 456.5 L446.4 451 L439.8 454.3" fill="none" stroke="#8a8a8a" stroke-width="1" stroke-linejoin="round"/>
<path d="M182.6 660.6 L184.7 655.5 L188.1 651.5 L194.3 650 L199.1 649.7 L200.9 645.4 L203.3 641.5 L204.6 636.9 L202.3 632.6 L199.1 625.9 L200.3 620.4 L202.9 617.1 L204.6 611.3 L206.7 608 L210.7 604.1 L214 599.7 L216.7 595.6 L219.2 593.1 L223.7 590.7 L225.4 587.4 L229.5 585.7 L233.8 582.1 L231.9 577.6 L228.9 572.4 L226.5 567.5 L228.7 560.8 L230.1 556.5 L235.4 554.6 L239.9 552.7 L243.9 551.7 L248.4 551.1 L252.5 549.8 L256.8 549.5 L261.3 548.9 L266.7 549.2 L272.1 544.4 L277.6 541.9" fill="none" stroke="#8c8c8c" stroke-width="1" stroke-linejoin="round"/>
<path d="M182.6 660.6 L190 664.3 L194.1 663.1 L199 659.4 L204.6 657 L206.5 653 L210 649.7" fill="none" stroke="#8c8c8c" stroke-width="1" stroke-linejoin="round"/>
<path d="M261.2 702.6 L262.5 708.6 L263 714.7 L263 719.1 L266.6 723.6 L270.9 725.4 L273.8 728.7 L277.6 731.9 L279.1 736.3 L279.4 742 L279.5 746.5 L281.4 749.6 L285.3 753.5 L288.8 755.6 L292.2 759.3 L291.6 765.7 L290.3 771.1 L290.4 775.7 L285.9 779.3 L283.2 781.3 L277.4 784.7 L274 788.8 L270.3 790.3 L265.4 792 L262.5 793 L257.9 793.7 L252.4 795.3 L248.4 797.6 L247.2 804.4 L246.6 808.6 L249.7 811.4 L254.7 815.4 L257.6 820.6 L261.2 823.2 L265.1 826.1 L268.5 828.4 L274 830.5 L275.6 834.2 L278.1 840.6 L278.9 845.3 L281.3 848.8 L278 854.2 L274.2 858 L272.1 861.6 L270.8 866.9 L271.7 870.3 L270.9 875.8 L268.6 879.4 L268.5 885.3 L270.3 894.1" fill="none" stroke="#808080" stroke-width="1.1" stroke-linejoin="round"/>
<path d="M879.1 748.5 L883.1 749.5 L889.1 752.3 L894.1 754.1 L900.4 753.3 L907.1 752.2 L911.7 748.5 L916.5 744.8 L923 745.9 L927.7 748.5 L932.6 749 L937.1 750 L942.6 750.4 L947.1 748.8 L952.2 743.7 L957.5 741.1 L960 737 L963.4 730 L966.8 726.1 L971.6 732.1 L976.2 735.5 L980.3 740.2 L984.8 744.4 L987.4 748.5 L992.3 750.7 L998.6 752.2 L1003.9 751.6 L1007.4 749.7 L1013.5 748.5 L1018.2 752.6 L1020.9 756 L1026.4 754.8 L1032 753.2 L1037.7 750.4 L1039.9 745.7 L1041.5 739.2 L1036.5 735.9 L1032.1 731.7 L1034.1 728.5 L1034.5 722.3 L1035.9 718.7 L1040.2 714.8 L1047.2 711.9 L1050.8 709.3 L1053.9 705.7 L1058.3 701.9" fill="none" stroke="#a09090" stroke-width="1.1" stroke-linejoin="round"/>
<path d="M879.1 748.5 L882.2 745.6 L886.6 742.9 L891.6 741.2 L897.3 738.2 L901.5 737.3 L904.2 732 L907.1 728 L904.9 724.8 L900.2 720.6 L895.9 718 L894.1 714.9 L888.9 710.8 L882.9 707.5" fill="none" stroke="#a09090" stroke-width="1.1" stroke-linejoin="round"/>
<path d="M1106.8 879.1 L1103.9 874.8 L1101.2 871.7 L1101.6 866.5 L1102.4 861.6 L1103.1 856.7 L1100.3 853.3 L1095.6 849.4 L1091.9 845.5 L1089.2 841.3 L1085.7 838.2 L1082.9 834.5 L1080.7 830.6 L1077.9 825.9 L1077.1 821.3 L1075.6 817.3 L1073.2 812 L1073.8 806.8 L1074.8 803.3 L1075.9 799.7 L1076.4 794.3 L1076.9 789.6 L1082.5 785.5 L1088.1 782.1 L1092.2 783.8 L1096.2 786.2 L1101.2 787.7 L1104.4 792.8 L1106.4 796.7 L1108.7 800.8 L1114.3 803.4 L1118.6 805.9 L1121.7 808.2 L1128.4 809.7 L1132.9 812 L1140 808.2" fill="none" stroke="#808080" stroke-width="1.1" stroke-linejoin="round"/>
<path d="M1136 459.7 L1139.3 455.5 L1144.2 452 L1147.1 449.5 L1155.2 447.5 L1159.1 449.2 L1163.4 451.5 L1165.4 456.6 L1173.5 455.6 L1179 451.5" fill="none" stroke="#707070" stroke-width="1.1" stroke-linejoin="round"/>
<path d="M1136 459.7 L1143.1 463.7 L1148.6 465.7 L1153.2 465.7 L1158.3 471.8 L1162.3 477.9 L1160.2 482.3 L1155.2 488.1 L1149.2 492.1 L1145.2 492.5 L1139 494.2 L1136 502.3 L1139.4 507 L1141 512.4 L1137 518.5 L1138 522.8 L1140 528.7 L1145.1 532.8 L1143.5 536.3 L1141 540.9 L1143.1 547 L1136.8 548.9 L1130.9 549 L1122.8 548 L1119.7 555.1 L1114.6 557.9" fill="none" stroke="#707070" stroke-width="1.1" stroke-linejoin="round"/>
<path d="M1143.1 540 L1141 546.1 L1136 546 L1130.9 548 L1127.4 547.6 L1122.8 549.1 L1118.7 556.2 L1116.1 559.5 L1111.5 563.3 L1108.5 566.4 L1103.2 568.2 L1096.4 571.5 L1095 575.1 L1095.3 580.6 L1098.9 587.9 L1100.4 592.8" fill="none" stroke="#707070" stroke-width="1.1" stroke-linejoin="round"/>
<path d="M1108.5 566.4 L1112.5 566.5 L1119.1 566.1 L1122.8 566.4 L1124.4 570.8 L1128.8 576.6 L1130.2 581.3 L1130.9 586.7 L1132.8 590.9 L1137 594.8 L1139.2 599.2 L1140.3 603.7 L1143.1 609 L1146.2 611.9 L1149.2 617.2 L1155.3 621.2 L1159.3 623.3 L1165.4 627.4 L1169.5 630.4 L1176.6 635.4" fill="none" stroke="#707070" stroke-width="1.1" stroke-linejoin="round"/>
<path d="M1072 675 L1069.9 681.1 L1070 686.2 L1070.1 691.1 L1069.8 696.8 L1071 700.4 L1066.8 700.6 L1061.8 702.4 L1053.7 702.4 L1048.9 705 L1045.6 708.5 L1041 709.8 L1035.4 712.6 L1030.4 717.7 L1035.4 722.8 L1039.5 720.7 L1041.5 726.8 L1037.8 729.6 L1033.4 730.9 L1034.6 736.5 L1035.4 743.1 L1039.5 747.9" fill="none" stroke="#707070" stroke-width="1.1" stroke-linejoin="round"/>
<path d="M960.3 702.4 L963.1 708.8 L962.4 713.1 L965.1 718.7 L966.4 723.8 L969.8 728.9 L972.5 732.9 L977.2 737.6 L980.6 741 L984.3 744.3 L986.7 747.9" fill="none" stroke="#6a6a6a" stroke-width="1" stroke-linejoin="round"/>
<text x="961" y="186" font-family="Liberation Sans, sans-serif" font-weight="bold" font-size="17" fill="#aaaaaa" textLength="111" lengthAdjust="spacing">Tschechien</text>
<text x="878" y="476" font-family="Liberation Sans, sans-serif" font-weight="bold" font-size="17" fill="#d2d2d2" textLength="102" lengthAdjust="spacing">Österreich</text>
<text x="326" y="582" font-family="Liberation Sans, sans-serif" font-weight="bold" font-size="18" fill="#cfc8c8" textLength="79" lengthAdjust="spacing">Schweiz</text>
<text x="462" y="528.5" font-family="Liberation Sans, sans-serif" font-weight="bold" font-size="12.5" fill="#d8d8d8" textLength="96" lengthAdjust="spacing">Liechtenstein</text>
<text x="938" y="678.5" font-family="Liberation Sans, sans-serif" font-weight="bold" font-size="12.5" fill="#d8d4d4" textLength="72" lengthAdjust="spacing">Slowenien</text>
<text x="947" y="805" font-family="Liberation Sans, sans-serif" font-weight="bold" font-size="17" fill="#a8a8a8" textLength="83" lengthAdjust="spacing">Kroatien</text>
</svg></div>
<!--/MAP-->
<!--PANEL-->
<div class="abs" style="left:1px;top:130px;width:1px;height:522px;background:#f5f5f5"></div><div class="abs" style="left:1px;top:130px;width:1px;height:40px;background:#237fb1"></div>
<div id="panel">
 <div id="search"><svg class="abs" style="left:9px;top:13px" width="17" height="17" viewBox="0 0 17 17"><circle cx="7" cy="7" r="5" stroke="#fff" stroke-width="2.300" fill="none"/><path d="M10.900 10.900 L15 15" stroke="#fff" stroke-width="3" stroke-linecap="round"/></svg><div class="t" id="p0" style="left:33px;top:15px;font-size:14.600px;color:#fff;font-weight:normal;text-shadow:0 0 0.500px #fff">Bitte Suchbegriff eingeben...</div></div>
 <div class="abs" style="left:0;top:40px;width:372px;height:5px;background:linear-gradient(#d9d9d9,rgba(245,245,245,0))"></div>
 <svg class="abs" style="left:14px;top:56px" width="6" height="10" viewBox="0 0 6 10"><polygon points="0.500,0.500 5,5 0.500,9.500" fill="#444"/></svg>
 <div class="t" id="p1" style="left:26px;top:53.800px;font-size:14.600px;color:#555">Kartographische Darstellung</div>
 <div class="abs" style="left:230px;top:51px;width:105px;height:21px;border:1px solid #bdbdbd;border-radius:3px;background:#fff;overflow:hidden"><div class="abs" style="left:0;top:0;width:47px;height:19px;background:#e4e4e4;border-right:1px solid #c4c4c4"></div><div class="t" id="p2" style="left:4.500px;top:4.500px;font-size:9.500px;color:#333">Physisch</div><div class="t" id="p3" style="left:52px;top:4.500px;font-size:9.500px;color:#333">Hexagonal</div></div>
 <svg class="abs" style="left:344px;top:52px" width="20" height="20" viewBox="0 0 20 20"><circle cx="10" cy="10" r="8" stroke="#2a86c2" stroke-width="2.200" fill="#fff"/><text x="10" y="15" text-anchor="middle" font-family="Liberation Sans, sans-serif" font-weight="bold" font-size="14" fill="#2a86c2">?</text></svg>
 <div class="abs" style="left:0;top:78px;width:372px;height:1px;background:#e9e9e9"></div>
 <svg class="abs" style="left:14px;top:94px" width="10" height="6" viewBox="0 0 10 6"><polygon points="0.500,0.500 9.500,0.500 5,5.500" fill="#444"/></svg>
 <div class="t" id="p4" style="left:26px;top:89.800px;font-size:14.400px;color:#555">Legende</div>
 <div class="abs" style="left:0;top:110px;width:372px;height:6px;background:linear-gradient(rgba(225,225,225,0),#e2e2e2)"></div>
 <div class="abs" style="left:0;top:115px;width:372px;height:48px;background:#f8f8f8"></div>
 <div class="dot" style="top:130px;background:#f4776a;border:2px solid #c23b30"></div><div class="t" style="left:46.300px;top:133.800px;font-size:10.500px;color:#b83228">A</div>
 <div class="li" id="p5" style="top:124px">Eigene Kategorie <b>Basistypen</b></div><div class="li" id="p6" style="top:140px"><b>in ger und sla</b></div>
 <div class="cb" style="top:132.500px;border-color:#8a8a8a;background:#e6e6e6"><svg width="10" height="10" viewBox="0 0 10 10"><path d="M1.800 5.200 L4 7.600 L8.400 2.200" stroke="#333" stroke-width="1.700" fill="none"/></svg></div><svg class="rx" style="top:133.5px" viewBox="0 0 10 10"><path d="M1.200 1.200 L8.800 8.800 M8.800 1.200 L1.200 8.800" stroke="#c0101a" stroke-width="2.600" fill="none"/></svg>
 <div class="abs" style="left:0;top:163px;width:372px;height:49px;background:#ececec;border-top:1px solid #e6e6e6;border-bottom:1px solid #e2e2e2"></div>
 <svg class="abs" style="left:15px;top:184px" width="10" height="6" viewBox="0 0 10 6"><polygon points="0.500,0.500 9.500,0.500 5,5.500" fill="#c9c9c9"/></svg>
 <div class="li" id="p7" style="top:172px">Flächen und Regionen <b>NUTS-</b></div><div class="li" id="p8" style="top:188px"><b>3 Grenzen</b></div>
 <svg class="abs" style="left:261px;top:174px" width="38" height="34" viewBox="0 0 38 34"><path d="M26.500 22 A12 12 0 1 1 28.500 14" stroke="#c2c2c2" stroke-width="2.600" fill="none"/><circle cx="16" cy="14.300" r="4" stroke="#b8b8b8" stroke-width="2" fill="none"/><path d="M18.500 17.300 L21 19.800" stroke="#b8b8b8" stroke-width="2"/><circle cx="29.500" cy="22.500" r="5" fill="#e9f3e4" stroke="#7dbb6c" stroke-width="1.300"/><path d="M27 22.600 L29 24.600 L32.200 20.600" stroke="#7dbb6c" stroke-width="1.300" fill="none"/></svg>
 <div class="cb" style="top:180.500px"><svg width="10" height="10" viewBox="0 0 10 10"><path d="M1.800 5.200 L4 7.600 L8.400 2.200" stroke="#9a9a9a" stroke-width="1.700" fill="none"/></svg></div><svg class="rx" style="top:181.5px" viewBox="0 0 10 10"><path d="M1.200 1.200 L8.800 8.800 M8.800 1.200 L1.200 8.800" stroke="#c0101a" stroke-width="2.600" fill="none"/></svg>
 <div class="dot" style="top:220.0px;background:#fb8072;border-color:#8f3f3a"></div><div class="li" id="q0" style="top:220.5px;font-size:12.400px">Land <b>Deutschland</b></div><div class="cb" style="top:222.0px"><svg width="10" height="10" viewBox="0 0 10 10"><path d="M1.800 5.200 L4 7.600 L8.400 2.200" stroke="#9a9a9a" stroke-width="1.700" fill="none"/></svg></div><svg class="rx" style="top:223.5px" viewBox="0 0 10 10"><path d="M1.200 1.200 L8.800 8.800 M8.800 1.200 L1.200 8.800" stroke="#c0101a" stroke-width="2.600" fill="none"/></svg>
 <div class="dot" style="top:254.0px;background:#a6d95a;border-color:#5f7c34"></div><div class="li" id="q1" style="top:254.5px;font-size:12.400px">Land <b>Frankreich</b></div><div class="cb" style="top:256.0px"><svg width="10" height="10" viewBox="0 0 10 10"><path d="M1.800 5.200 L4 7.600 L8.400 2.200" stroke="#9a9a9a" stroke-width="1.700" fill="none"/></svg></div><svg class="rx" style="top:257.5px" viewBox="0 0 10 10"><path d="M1.200 1.200 L8.800 8.800 M8.800 1.200 L1.200 8.800" stroke="#c0101a" stroke-width="2.600" fill="none"/></svg>
 <div class="dot" style="top:288.0px;background:#7fb0d6;border-color:#3f5f7a"></div><div class="li" id="q2" style="top:288.5px;font-size:12.400px">Land <b>Italien</b></div><div class="cb" style="top:290.0px"><svg width="10" height="10" viewBox="0 0 10 10"><path d="M1.800 5.200 L4 7.600 L8.400 2.200" stroke="#9a9a9a" stroke-width="1.700" fill="none"/></svg></div><svg class="rx" style="top:291.5px" viewBox="0 0 10 10"><path d="M1.200 1.200 L8.800 8.800 M8.800 1.200 L1.200 8.800" stroke="#c0101a" stroke-width="2.600" fill="none"/></svg>
 <div class="dot" style="top:322.0px;background:#fff066;border-color:#8a8038"></div><div class="li" id="q3" style="top:322.5px;font-size:12.400px">Land <b>Liechtenstein</b></div><div class="cb" style="top:324.0px"><svg width="10" height="10" viewBox="0 0 10 10"><path d="M1.800 5.200 L4 7.600 L8.400 2.200" stroke="#9a9a9a" stroke-width="1.700" fill="none"/></svg></div><svg class="rx" style="top:325.5px" viewBox="0 0 10 10"><path d="M1.200 1.200 L8.800 8.800 M8.800 1.200 L1.200 8.800" stroke="#c0101a" stroke-width="2.600" fill="none"/></svg>
 <div class="dot" style="top:356.0px;background:#bebada;border-color:#6a6880"></div><div class="li" id="q4" style="top:356.5px;font-size:12.400px">Land <b>Monaco</b></div><div class="cb" style="top:358.0px"><svg width="10" height="10" viewBox="0 0 10 10"><path d="M1.800 5.200 L4 7.600 L8.400 2.200" stroke="#9a9a9a" stroke-width="1.700" fill="none"/></svg></div><svg class="rx" style="top:359.5px" viewBox="0 0 10 10"><path d="M1.200 1.200 L8.800 8.800 M8.800 1.200 L1.200 8.800" stroke="#c0101a" stroke-width="2.600" fill="none"/></svg>
 <div class="dot" style="top:390.0px;background:#8dd3c7;border-color:#4c7a72"></div><div class="li" id="q5" style="top:390.5px;font-size:12.400px">Land <b>Österreich</b></div><div class="cb" style="top:392.0px"><svg width="10" height="10" viewBox="0 0 10 10"><path d="M1.800 5.200 L4 7.600 L8.400 2.200" stroke="#9a9a9a" stroke-width="1.700" fill="none"/></svg></div><svg class="rx" style="top:393.5px" viewBox="0 0 10 10"><path d="M1.200 1.200 L8.800 8.800 M8.800 1.200 L1.200 8.800" stroke="#c0101a" stroke-width="2.600" fill="none"/></svg>
 <div class="dot" style="top:424.0px;background:#fdb05a;border-color:#8c6232"></div><div class="li" id="q6" style="top:424.5px;font-size:12.400px">Land <b>Schweiz</b></div><div class="cb" style="top:426.0px"><svg width="10" height="10" viewBox="0 0 10 10"><path d="M1.800 5.200 L4 7.600 L8.400 2.200" stroke="#9a9a9a" stroke-width="1.700" fill="none"/></svg></div><svg class="rx" style="top:427.5px" viewBox="0 0 10 10"><path d="M1.200 1.200 L8.800 8.800 M8.800 1.200 L1.200 8.800" stroke="#c0101a" stroke-width="2.600" fill="none"/></svg>
 <div class="dot" style="top:458.0px;background:#bd7ec0;border-color:#6c486e"></div><div class="li" id="q7" style="top:458.5px;font-size:12.400px">Land <b>Slowenien</b></div><div class="cb" style="top:460.0px"><svg width="10" height="10" viewBox="0 0 10 10"><path d="M1.800 5.200 L4 7.600 L8.400 2.200" stroke="#9a9a9a" stroke-width="1.700" fill="none"/></svg></div><svg class="rx" style="top:461.5px" viewBox="0 0 10 10"><path d="M1.200 1.200 L8.800 8.800 M8.800 1.200 L1.200 8.800" stroke="#c0101a" stroke-width="2.600" fill="none"/></svg>
 <div class="abs" style="left:0;top:483px;width:372px;height:1px;background:#e6e6e6"></div>
 <svg class="abs" style="left:14px;top:498px" width="6" height="10" viewBox="0 0 6 10"><polygon points="0.500,0.500 5,5 0.500,9.500" fill="#444"/></svg>
 <div class="t" id="p9" style="left:26px;top:495.700px;font-size:14.400px;color:#555">Synoptische Karten</div>
</div>
<svg class="abs" style="left:55px;top:651px" width="230" height="32" viewBox="0 0 230 32"><path d="M0 0 C18 0 22 6 28 18 C32 27 36 29 44 29 L192 29 C200 29 204 27 208 18 C214 6 218 0 228 0 Z" fill="#f5f5f5"/><rect x="49" y="1" width="134" height="26" fill="#fdfdfd"/><polygon points="63,17 71,17 67,12" fill="#444"/></svg>
<div class="t" id="p10" style="left:129px;top:659.500px;font-size:12.500px;font-weight:bold;color:#444">Menü schließen</div>
<!--/PANEL-->
<!--OVERLAYS-->
<!-- top-right tabs -->
<svg class="abs" style="left:880px;top:130px" width="299" height="30" viewBox="0 0 299 30">
  <defs><linearGradient id="vg" x1="0" y1="0" x2="0" y2="1"><stop offset="0" stop-color="#d4d4d4"/><stop offset="0.350" stop-color="#f4f4f4"/><stop offset="0.700" stop-color="#fdfdfd"/></linearGradient></defs>
  <path d="M8 0 C22 0 26 6 31 15 C35 23 38 26.500 46 26.500 L166 26.500 C173 26.500 176 24 180 18 L187.500 7.500 L196 0 Z" fill="#fcfcfc"/>
  <path d="M299 0 L200 0 C194 0.500 190 3.500 187.300 7.800 L194.500 19 C198 24.500 201 26.800 208 26.800 L299 26.800 Z" fill="url(#vg)"/>
  <!-- flag -->
  <clipPath id="fc"><circle cx="61" cy="10.800" r="9"/></clipPath>
  <g clip-path="url(#fc)"><rect x="50" y="0" width="22" height="8" fill="#636363"/><rect x="50" y="8" width="22" height="6" fill="#e8605e"/><rect x="50" y="14" width="22" height="8" fill="#f6d65a"/></g>
  <!-- user -->
  <circle cx="92" cy="10" r="7.600" fill="#f6f6fb" stroke="#a2a2a2" stroke-width="2.500"/>
  <path d="M86.300 15 Q92 9 97.700 15 Q92 18.500 86.300 15Z" fill="#d6d6e6"/>
  <circle cx="92" cy="7.600" r="3" fill="#fff" stroke="#dcdce8" stroke-width="0.800"/>
  <circle cx="100.800" cy="16.400" r="5.400" fill="#10851c"/>
  <path d="M98 16.500 L100.200 18.700 L103.800 14.300" stroke="#fff" stroke-width="1.700" fill="none"/>
  <!-- db -->
  <g fill="#a9a9a9">
    <ellipse cx="123" cy="4.200" rx="8" ry="3"/>
    <path d="M115 6.500 Q123 10.500 131 6.500 V9.800 Q123 13.800 115 9.800Z"/>
    <path d="M115 11.300 Q123 15.300 131 11.300 V14.600 Q123 18.600 115 14.600Z"/>
    <path d="M115 16.100 Q123 20.100 131 16.100 V17.400 Q123 21.400 115 17.400Z"/>
  </g>
  <!-- share -->
  <g fill="#ababab" stroke="#ababab"><circle cx="157.200" cy="4.500" r="3" stroke="none"/><circle cx="148" cy="10.300" r="3" stroke="none"/><circle cx="157.200" cy="16" r="3" stroke="none"/><path d="M157.200 4.500 L148 10.300 L157.200 16" stroke-width="1.800" fill="none"/></g>
  <polygon points="279,10.500 287,10.500 283,15" fill="#c4c4c4"/>
</svg>
<div class="t" id="ver" style="left:1089.500px;top:136.500px;font-size:12px;letter-spacing:-0.170px;color:#c6c6c6">Version XXX</div>
<!-- fullscreen -->
<div class="abs" style="left:1143px;top:167px;width:25px;height:25px;background:#fff;border-radius:3px"><svg class="abs" style="left:0;top:0" width="25" height="25" viewBox="0 0 25 25"><path d="M6.200 10.500 V6.200 H10.500 M14.500 6.200 H18.800 V10.500 M18.800 14.500 V18.800 H14.500 M10.500 18.800 H6.200 V14.500" stroke="#666" stroke-width="2" fill="none"/></svg></div>
<!-- map controls -->
<div class="abs" style="left:1138px;top:867px;width:30px;height:29px;background:#fff;border-radius:2px"><svg class="abs" style="left:0;top:0" width="30" height="29" viewBox="0 0 30 29"><circle cx="15" cy="14.500" r="8" fill="#666"/><path d="M18.500 9.500 L16.300 15.800 L11.500 19.500 L13.700 13.200Z" fill="#fff"/><circle cx="15" cy="14.500" r="1" fill="#666"/></svg></div>
<div class="abs" style="left:1138px;top:905px;width:30px;height:29px;background:#fff;border-radius:2px"><svg class="abs" style="left:0;top:0" width="30" height="29" viewBox="0 0 30 29"><g transform="translate(15,14.500)"><g fill="#666"><rect x="-2" y="-8" width="4" height="16" rx="0.800"/><rect x="-2" y="-8" width="4" height="16" rx="0.800" transform="rotate(60)"/><rect x="-2" y="-8" width="4" height="16" rx="0.800" transform="rotate(120)"/><circle r="5.800"/></g><circle r="2.600" fill="#fff"/></g></svg></div>
<div class="abs" style="left:1140px;top:944px;width:28px;height:55px;background:#fff;border-radius:2px"><svg class="abs" style="left:0;top:0" width="28" height="55" viewBox="0 0 28 55"><path d="M9 13.500 H19 M14 8.500 V18.500 M9 41.500 H19" stroke="#666" stroke-width="2.600"/><path d="M4 27.500 H24" stroke="#e6e6e6" stroke-width="1"/></svg></div>
<!-- gradient legend -->
<div class="t" id="g0" style="left:453px;top:951.500px;font-size:13px;color:#fff;text-shadow:0 0 0.500px #fff">0</div>
<div class="t" id="g1" style="left:695.500px;top:951.500px;font-size:13px;color:#fff;text-shadow:0 0 0.500px #fff">568</div>
<div class="abs" style="left:454px;top:969px;width:5px;height:34px;background:#5c5c5c;border:1px solid #777"></div>
<div class="abs" style="left:460px;top:969px;width:258px;height:35px;background:linear-gradient(90deg,#ffffff,#ff0000)"></div>
<!-- attribution -->
<div class="abs" style="left:559px;top:1009px;width:620px;height:14px;background:rgba(214,214,214,0.920)"></div>
<div class="t" id="a0" style="left:563px;top:1011px;font-size:9.800px;color:#444">Kartendaten © 2018 GeoBasis-DE/BKG (©2009), Google, Inst. Geogr. Nacional</div>
<div class="abs" style="left:914px;top:1009px;width:1px;height:14px;background:#2a2a2a"></div>
<div class="t" id="a1" style="left:920px;top:1011px;font-size:9.800px;color:#444">Nutzungsbedingungen</div>
<div class="abs" style="left:1026px;top:1009px;width:1px;height:14px;background:#2a2a2a"></div>
<div class="t" id="a2" style="left:1032px;top:1011px;font-size:9.800px;color:#444">Fehler bei Google Maps melden</div>
<!-- google logo -->
<div class="t" id="goog" style="left:7.500px;top:998px;font-size:20.500px;color:#fff;font-weight:normal;text-shadow:0 0 0.600px #fff;letter-spacing:-0.650px">Google</div>
<!--/OVERLAYS-->
<div id="win"></div>
</body>
</html>
